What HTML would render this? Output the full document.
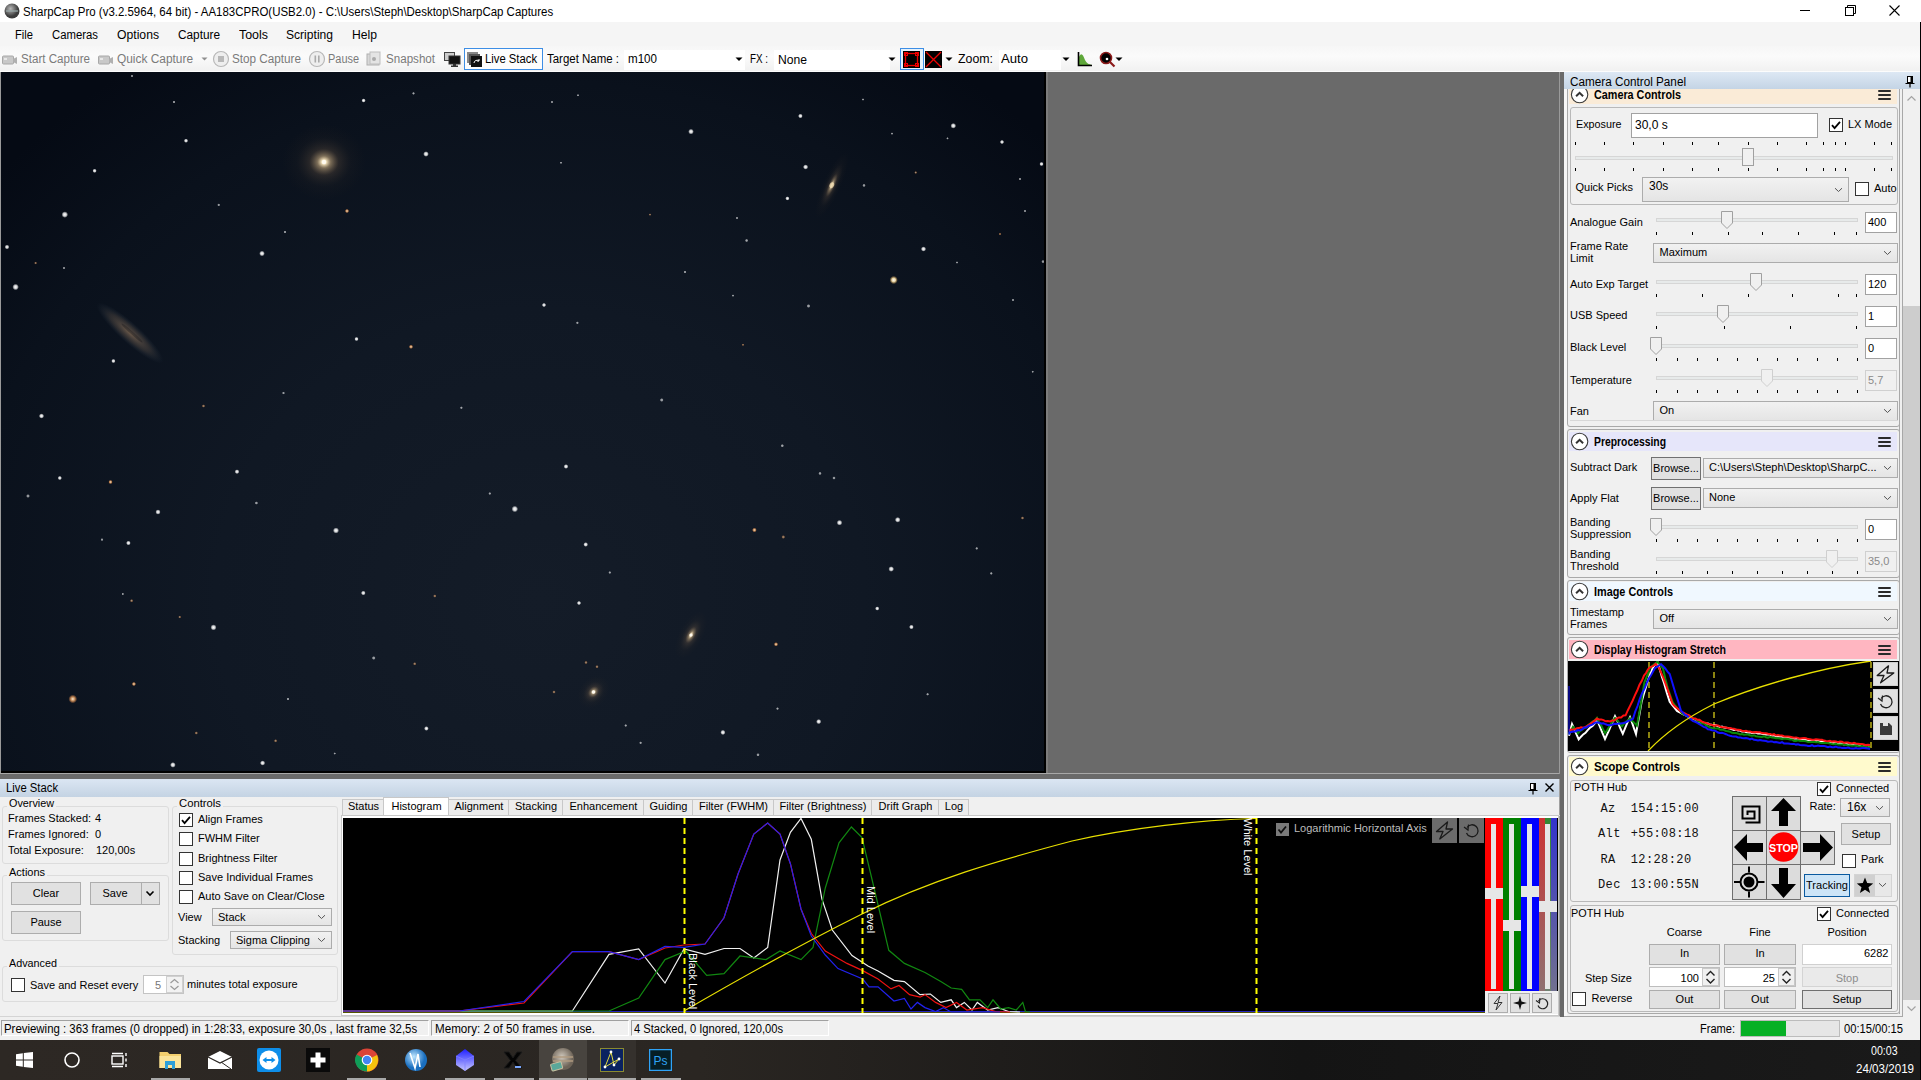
<!DOCTYPE html><html><head><meta charset="utf-8"><style>
html,body{margin:0;padding:0;width:1921px;height:1080px;overflow:hidden;background:#f0f0f0;}
body{position:relative;font-family:"Liberation Sans", sans-serif;}
.t{position:absolute;white-space:pre;line-height:1;}
.r{position:absolute;box-sizing:border-box;}
svg{position:absolute;}
</style></head><body>
<div class="r" style="left:0px;top:0px;width:1921px;height:22px;background:#ffffff;"></div>
<svg style="left:4px;top:3px" width="16" height="16"><defs><radialGradient id="ai" cx="40%" cy="35%"><stop offset="0" stop-color="#b8b8b8"/><stop offset="1" stop-color="#3c3c3c"/></radialGradient></defs><circle cx="8" cy="8" r="7.5" fill="url(#ai)"/><rect x="2" y="7" width="12" height="2" fill="#9aa" opacity=".6"/></svg>
<div class="t" style="left:23.00px;top:5.84px;font-size:12px;color:#000;transform:scaleX(0.9553);transform-origin:0 0;">SharpCap Pro (v3.2.5964, 64 bit) - AA183CPRO(USB2.0) - C:\Users\Steph\Desktop\SharpCap Captures</div>
<svg style="left:1790px;top:0" width="131" height="22"><path d="M10 10.5h10" stroke="#000" stroke-width="1"/><rect x="55.5" y="7.5" width="8" height="8" fill="none" stroke="#000"/><path d="M57.5 7.5v-2h8v8h-2" fill="none" stroke="#000"/><path d="M99.5 5.5l10 10M109.5 5.5l-10 10" stroke="#000" stroke-width="1.1"/></svg>
<div class="r" style="left:0px;top:22px;width:1921px;height:24px;background:#f5f5f5;"></div>
<div class="t" style="left:15.00px;top:28.84px;font-size:12px;color:#000;transform:scaleX(0.9305);transform-origin:0 0;">File</div>
<div class="t" style="left:52.00px;top:28.84px;font-size:12px;color:#000;transform:scaleX(0.9448);transform-origin:0 0;">Cameras</div>
<div class="t" style="left:117.00px;top:28.84px;font-size:12px;color:#000;transform:scaleX(1.0159);transform-origin:0 0;">Options</div>
<div class="t" style="left:178.00px;top:28.84px;font-size:12px;color:#000;transform:scaleX(0.9839);transform-origin:0 0;">Capture</div>
<div class="t" style="left:239.00px;top:28.84px;font-size:12px;color:#000;transform:scaleX(1.0351);transform-origin:0 0;">Tools</div>
<div class="t" style="left:286.00px;top:28.84px;font-size:12px;color:#000;transform:scaleX(1.0067);transform-origin:0 0;">Scripting</div>
<div class="t" style="left:352.00px;top:28.84px;font-size:12px;color:#000;transform:scaleX(1.0127);transform-origin:0 0;">Help</div>
<div class="r" style="left:0px;top:46px;width:1921px;height:26px;background:linear-gradient(#f6f6f6,#fbfbfb 40%,#f1f1f1 95%,#fcfcfc 96%);"></div>
<svg style="left:2px;top:54px" width="16" height="12"><rect x="0.5" y="2" width="11" height="8" rx="1" fill="#c8c8c8" stroke="#a8a8a8"/><path d="M11 5l4-2v7l-4-2z" fill="#b0b0b0"/><rect x="2" y="4" width="3" height="2" fill="#e8e8e8"/></svg>
<div class="t" style="left:21.00px;top:52.84px;font-size:12px;color:#7a7a7a;transform:scaleX(0.9671);transform-origin:0 0;">Start Capture</div>
<svg style="left:98px;top:54px" width="16" height="12"><rect x="0.5" y="2" width="11" height="8" rx="1" fill="#c8c8c8" stroke="#a8a8a8"/><path d="M11 5l4-2v7l-4-2z" fill="#b0b0b0"/><rect x="2" y="4" width="3" height="2" fill="#e8e8e8"/></svg>
<div class="t" style="left:117.00px;top:52.84px;font-size:12px;color:#7a7a7a;transform:scaleX(0.9910);transform-origin:0 0;">Quick Capture</div>
<svg style="left:200px;top:56px" width="10" height="6"><path d="M1.5 1.5h6l-3 3z" fill="#909090"/></svg>
<svg style="left:212px;top:50px" width="18" height="18"><circle cx="9" cy="9" r="7.5" fill="#eee" stroke="#b8b8b8" stroke-width="1.2"/><rect x="6" y="6" width="6" height="6" fill="#b8b8b8"/></svg>
<div class="t" style="left:232.00px;top:52.84px;font-size:12px;color:#7a7a7a;transform:scaleX(0.9761);transform-origin:0 0;">Stop Capture</div>
<svg style="left:308px;top:50px" width="18" height="18"><circle cx="9" cy="9" r="7.5" fill="#eee" stroke="#b8b8b8" stroke-width="1.2"/><rect x="6.5" y="5.5" width="1.6" height="7" fill="#aaa"/><rect x="10" y="5.5" width="1.6" height="7" fill="#aaa"/></svg>
<div class="t" style="left:328.00px;top:52.84px;font-size:12px;color:#7a7a7a;transform:scaleX(0.9113);transform-origin:0 0;">Pause</div>
<svg style="left:366px;top:51px" width="16" height="16"><rect x="1" y="3" width="12" height="11" fill="#d8d8d8" stroke="#b0b0b0"/><rect x="4" y="1" width="10" height="12" fill="#e4e4e4" stroke="#bdbdbd"/><circle cx="8" cy="8" r="2" fill="#aaa"/></svg>
<div class="t" style="left:386.00px;top:52.84px;font-size:12px;color:#7a7a7a;transform:scaleX(0.9667);transform-origin:0 0;">Snapshot</div>
<svg style="left:444px;top:52px" width="17" height="15"><rect x="0.5" y="0.5" width="10" height="8" fill="#ccc" stroke="#444"/><rect x="5" y="4" width="11" height="8" fill="#111" stroke="#333"/><rect x="9" y="12" width="3" height="2" fill="#333"/><rect x="7" y="13.5" width="7" height="1.5" fill="#333"/></svg>
<div class="r" style="left:464px;top:48px;width:79px;height:22px;background:#fdfdfd;box-shadow:inset 0 0 0 1px #3d8ee5;"></div>
<svg style="left:467px;top:52px" width="16" height="16"><rect x="0" y="0" width="11" height="11" fill="#888"/><rect x="2" y="2" width="11" height="11" fill="#555"/><rect x="4" y="4" width="11" height="11" fill="#111"/><path d="M7 11a3 3 0 0 1 5-2M12 9v-2M12 9h-2" stroke="#fff" fill="none" stroke-width="1"/></svg>
<div class="t" style="left:485.00px;top:52.84px;font-size:12px;color:#000;transform:scaleX(0.9396);transform-origin:0 0;">Live Stack</div>
<div class="t" style="left:547.00px;top:52.84px;font-size:12px;color:#000;transform:scaleX(0.9556);transform-origin:0 0;">Target Name :</div>
<div class="r" style="left:624px;top:50px;width:121px;height:20px;background:#ffffff;"></div>
<div class="t" style="left:628.00px;top:52.84px;font-size:12px;color:#000;transform:scaleX(0.9662);transform-origin:0 0;">m100</div>
<svg style="left:735px;top:57px" width="8" height="5"><path d="M0.5 0.5h7l-3.5 3.5z" fill="#000"/></svg>
<div class="t" style="left:750.00px;top:52.84px;font-size:12px;color:#000;transform:scaleX(0.8188);transform-origin:0 0;">FX :</div>
<div class="r" style="left:774px;top:50px;width:116px;height:20px;background:#ffffff;"></div>
<div class="t" style="left:778.00px;top:53.84px;font-size:12px;color:#000;transform:scaleX(1.0109);transform-origin:0 0;">None</div>
<svg style="left:888px;top:57px" width="8" height="5"><path d="M0.5 0.5h7l-3.5 3.5z" fill="#000"/></svg>
<div class="r" style="left:900px;top:48px;width:24px;height:22px;background:#e5f1fb;box-shadow:inset 0 0 0 1px #3d8ee5;"></div>
<svg style="left:903px;top:51px" width="17" height="17"><rect width="17" height="17" fill="#000"/><rect x="2.5" y="2.5" width="12" height="12" fill="none" stroke="#e00" stroke-width="1.3"/><rect x="1.5" y="1.5" width="3" height="3" fill="none" stroke="#e00"/><rect x="12.5" y="1.5" width="3" height="3" fill="none" stroke="#e00"/><rect x="1.5" y="12.5" width="3" height="3" fill="none" stroke="#e00"/><rect x="12.5" y="12.5" width="3" height="3" fill="none" stroke="#e00"/></svg>
<svg style="left:925px;top:51px" width="17" height="17"><rect width="17" height="17" fill="#000"/><path d="M1 1l15 15M16 1l-15 15" stroke="#e00" stroke-width="1.3"/></svg>
<svg style="left:945px;top:57px" width="8" height="5"><path d="M0.5 0.5h7l-3.5 3.5z" fill="#000"/></svg>
<div class="t" style="left:958.00px;top:52.84px;font-size:12px;color:#000;transform:scaleX(1.0294);transform-origin:0 0;">Zoom:</div>
<div class="r" style="left:999px;top:50px;width:62px;height:20px;background:#ffffff;"></div>
<div class="t" style="left:1001.00px;top:52.84px;font-size:12px;color:#000;transform:scaleX(1.0944);transform-origin:0 0;">Auto</div>
<svg style="left:1062px;top:57px" width="8" height="5"><path d="M0.5 0.5h7l-3.5 3.5z" fill="#000"/></svg>
<svg style="left:1077px;top:51px" width="16" height="16"><path d="M2 14 L2 6 C4 1 6 3 8 9 C10 13 12 13 15 14 Z" fill="#5fa83a"/><path d="M1.5 1v13.5H15" stroke="#000" stroke-width="1.6" fill="none"/></svg>
<svg style="left:1099px;top:51px" width="18" height="17"><circle cx="7" cy="7" r="5.5" fill="#000" stroke="#8b1a1a" stroke-width="1.6"/><path d="M10.5 10.5l5 5" stroke="#8b1a1a" stroke-width="2.2"/><circle cx="8" cy="8" r="1.3" fill="#fff"/></svg>
<svg style="left:1115px;top:57px" width="8" height="5"><path d="M0.5 0.5h7l-3.5 3.5z" fill="#000"/></svg>
<svg style="left:0;top:72px" width="1046" height="701" viewBox="0 72 1046 701"><defs><radialGradient id="bg" gradientUnits="userSpaceOnUse" cx="540" cy="600" r="720" gradientTransform="translate(540 600) scale(1 0.9) translate(-540 -600)"><stop offset="0" stop-color="#141c28"/><stop offset="0.45" stop-color="#101824"/><stop offset="0.8" stop-color="#0a111c"/><stop offset="1" stop-color="#050a14"/></radialGradient><radialGradient id="glw"><stop offset="0" stop-color="#fffaf0"/><stop offset="0.06" stop-color="#fae8c0" stop-opacity=".95"/><stop offset="0.16" stop-color="#d8b888" stop-opacity=".55"/><stop offset="0.35" stop-color="#907050" stop-opacity=".22"/><stop offset="0.65" stop-color="#504030" stop-opacity=".08"/><stop offset="1" stop-color="#403020" stop-opacity="0"/></radialGradient><radialGradient id="sg"><stop offset="0" stop-color="#fff"/><stop offset="0.5" stop-color="#fff" stop-opacity=".8"/><stop offset="1" stop-color="#fff" stop-opacity="0"/></radialGradient><radialGradient id="so"><stop offset="0" stop-color="#fff0d8"/><stop offset="0.5" stop-color="#e8a060" stop-opacity=".8"/><stop offset="1" stop-color="#e08040" stop-opacity="0"/></radialGradient><radialGradient id="sy"><stop offset="0" stop-color="#fff"/><stop offset="0.45" stop-color="#ffe8b0" stop-opacity=".9"/><stop offset="1" stop-color="#e0a040" stop-opacity="0"/></radialGradient></defs><rect x="0" y="72" width="1046" height="701" fill="#060a14"/><rect x="0" y="72" width="1046" height="701" fill="url(#bg)"/><circle cx="426" cy="154" r="2.86" fill="url(#sg)" opacity="1"/><circle cx="363.6" cy="100.5" r="2.20" fill="url(#sg)" opacity="1"/><circle cx="186" cy="140.7" r="2.20" fill="url(#sg)" opacity="1"/><circle cx="94.6" cy="170.8" r="2.20" fill="url(#sg)" opacity="1"/><circle cx="64.8" cy="214.6" r="3.30" fill="url(#sg)" opacity="1"/><circle cx="7" cy="247" r="2.42" fill="url(#sg)" opacity="1"/><circle cx="15.6" cy="287" r="3.30" fill="url(#sg)" opacity="1"/><circle cx="262" cy="253.5" r="2.86" fill="url(#sg)" opacity="1"/><circle cx="347" cy="211" r="2.20" fill="url(#so)" opacity="1"/><circle cx="285" cy="232" r="1.54" fill="url(#sg)" opacity="0.65"/><circle cx="218.7" cy="204.9" r="1.54" fill="url(#sg)" opacity="0.65"/><circle cx="113.4" cy="361" r="2.20" fill="url(#sg)" opacity="1"/><circle cx="41.5" cy="416" r="2.64" fill="url(#sg)" opacity="1"/><circle cx="356.5" cy="339" r="2.20" fill="url(#sg)" opacity="1"/><circle cx="411" cy="346.8" r="2.20" fill="url(#so)" opacity="1"/><circle cx="203.5" cy="406" r="1.76" fill="url(#so)" opacity="0.65"/><circle cx="283.5" cy="393" r="1.54" fill="url(#sg)" opacity="0.65"/><circle cx="461.4" cy="407.7" r="1.54" fill="url(#sg)" opacity="0.65"/><circle cx="413.5" cy="93.4" r="1.54" fill="url(#sg)" opacity="0.65"/><circle cx="174" cy="102" r="1.54" fill="url(#sg)" opacity="0.65"/><circle cx="132" cy="76" r="1.32" fill="url(#sg)" opacity="0.65"/><circle cx="35.6" cy="263" r="1.54" fill="url(#so)" opacity="0.65"/><circle cx="64" cy="268" r="1.32" fill="url(#sg)" opacity="0.65"/><circle cx="691" cy="131.6" r="2.86" fill="url(#sg)" opacity="1"/><circle cx="800.4" cy="116" r="2.42" fill="url(#sg)" opacity="1"/><circle cx="953.3" cy="125.8" r="2.86" fill="url(#sg)" opacity="1"/><circle cx="1002" cy="142" r="2.20" fill="url(#sg)" opacity="1"/><circle cx="1041.5" cy="164" r="2.20" fill="url(#sg)" opacity="1"/><circle cx="805.6" cy="167" r="2.64" fill="url(#sg)" opacity="1"/><circle cx="787.4" cy="198.4" r="2.20" fill="url(#sg)" opacity="1"/><circle cx="864" cy="185.4" r="1.76" fill="url(#sg)" opacity="0.65"/><circle cx="746.6" cy="240.5" r="1.76" fill="url(#sg)" opacity="0.65"/><circle cx="923.5" cy="249" r="2.64" fill="url(#sg)" opacity="1"/><circle cx="893.7" cy="280" r="4.18" fill="url(#sy)" opacity="1"/><circle cx="685" cy="272" r="1.54" fill="url(#sg)" opacity="0.65"/><circle cx="544" cy="305" r="2.20" fill="url(#sg)" opacity="1"/><circle cx="808.5" cy="306" r="1.98" fill="url(#sg)" opacity="0.65"/><circle cx="577.4" cy="322.8" r="1.54" fill="url(#sg)" opacity="0.65"/><circle cx="661.7" cy="400" r="1.98" fill="url(#sg)" opacity="0.65"/><circle cx="1043" cy="261.6" r="1.76" fill="url(#sg)" opacity="0.65"/><circle cx="957" cy="262.5" r="1.32" fill="url(#sg)" opacity="0.65"/><circle cx="59.8" cy="478" r="2.20" fill="url(#sg)" opacity="1"/><circle cx="28" cy="496" r="1.98" fill="url(#sg)" opacity="0.65"/><circle cx="110.5" cy="482" r="2.20" fill="url(#so)" opacity="1"/><circle cx="158" cy="512" r="2.64" fill="url(#sg)" opacity="1"/><circle cx="128.4" cy="543" r="2.42" fill="url(#sg)" opacity="1"/><circle cx="102" cy="539.6" r="1.54" fill="url(#sg)" opacity="0.65"/><circle cx="237" cy="471.7" r="2.42" fill="url(#sg)" opacity="1"/><circle cx="256.4" cy="503" r="1.76" fill="url(#sg)" opacity="0.65"/><circle cx="336" cy="530.5" r="3.08" fill="url(#sg)" opacity="1"/><circle cx="514.8" cy="509" r="3.30" fill="url(#sg)" opacity="1"/><circle cx="489.8" cy="493.5" r="1.54" fill="url(#sg)" opacity="0.65"/><circle cx="363.3" cy="593" r="2.42" fill="url(#sg)" opacity="1"/><circle cx="434.8" cy="596" r="1.76" fill="url(#so)" opacity="0.65"/><circle cx="213.5" cy="627.4" r="3.08" fill="url(#sg)" opacity="1"/><circle cx="131.6" cy="600.7" r="1.76" fill="url(#so)" opacity="0.65"/><circle cx="179.7" cy="617" r="1.54" fill="url(#so)" opacity="0.65"/><circle cx="72.8" cy="699" r="4.40" fill="url(#so)" opacity="1"/><circle cx="133.9" cy="684" r="2.20" fill="url(#so)" opacity="1"/><circle cx="373.7" cy="658" r="1.98" fill="url(#sg)" opacity="0.65"/><circle cx="414.7" cy="663.8" r="1.76" fill="url(#so)" opacity="0.65"/><circle cx="288" cy="699" r="1.54" fill="url(#sg)" opacity="0.65"/><circle cx="426.4" cy="728.5" r="2.42" fill="url(#sg)" opacity="1"/><circle cx="196.3" cy="733" r="1.76" fill="url(#so)" opacity="0.65"/><circle cx="275.6" cy="740.8" r="1.76" fill="url(#so)" opacity="0.65"/><circle cx="172.9" cy="764.9" r="2.86" fill="url(#sg)" opacity="1"/><circle cx="262.6" cy="763" r="2.64" fill="url(#sg)" opacity="1"/><circle cx="122.8" cy="594" r="1.32" fill="url(#sg)" opacity="0.65"/><circle cx="334.7" cy="753.5" r="1.32" fill="url(#sg)" opacity="0.65"/><circle cx="566" cy="466.5" r="2.42" fill="url(#sg)" opacity="1"/><circle cx="585.7" cy="544.5" r="2.42" fill="url(#sg)" opacity="1"/><circle cx="579" cy="603" r="2.20" fill="url(#sg)" opacity="1"/><circle cx="586" cy="662.5" r="1.76" fill="url(#so)" opacity="0.65"/><circle cx="597" cy="666.7" r="1.76" fill="url(#so)" opacity="0.65"/><circle cx="554" cy="692" r="1.76" fill="url(#so)" opacity="0.65"/><circle cx="754.4" cy="530" r="2.42" fill="url(#so)" opacity="1"/><circle cx="783.3" cy="537" r="1.98" fill="url(#so)" opacity="0.65"/><circle cx="839.5" cy="522.7" r="2.86" fill="url(#sg)" opacity="1"/><circle cx="897.7" cy="519.8" r="2.86" fill="url(#sg)" opacity="1"/><circle cx="820" cy="473.4" r="1.76" fill="url(#sg)" opacity="0.65"/><circle cx="834" cy="478" r="1.76" fill="url(#sg)" opacity="0.65"/><circle cx="782.3" cy="445.7" r="1.76" fill="url(#sg)" opacity="0.65"/><circle cx="891.2" cy="569" r="2.86" fill="url(#sg)" opacity="1"/><circle cx="877.2" cy="608.5" r="2.20" fill="url(#sg)" opacity="1"/><circle cx="911.4" cy="627" r="2.42" fill="url(#sg)" opacity="1"/><circle cx="776" cy="644.3" r="2.20" fill="url(#so)" opacity="1"/><circle cx="1022.5" cy="518" r="1.76" fill="url(#so)" opacity="0.65"/><circle cx="976.7" cy="548.4" r="1.54" fill="url(#sg)" opacity="0.65"/><circle cx="991.3" cy="573.4" r="1.54" fill="url(#sg)" opacity="0.65"/><circle cx="915.7" cy="172.5" r="1.54" fill="url(#so)" opacity="0.65"/><circle cx="892" cy="133.6" r="1.32" fill="url(#sg)" opacity="0.65"/><circle cx="947.5" cy="138.4" r="1.32" fill="url(#sg)" opacity="0.65"/><circle cx="863" cy="99.5" r="1.32" fill="url(#sg)" opacity="0.65"/><circle cx="561" cy="162.7" r="1.32" fill="url(#sg)" opacity="0.65"/><circle cx="552" cy="102" r="1.32" fill="url(#sg)" opacity="0.65"/><circle cx="578" cy="95.3" r="1.32" fill="url(#sg)" opacity="0.65"/><circle cx="650" cy="214.6" r="1.32" fill="url(#so)" opacity="0.65"/><circle cx="737" cy="218" r="1.32" fill="url(#sg)" opacity="0.65"/><circle cx="1000" cy="234" r="1.32" fill="url(#so)" opacity="0.65"/><circle cx="1013" cy="300" r="1.32" fill="url(#sg)" opacity="0.65"/><circle cx="733" cy="295.6" r="1.32" fill="url(#sg)" opacity="0.65"/><circle cx="743" cy="344.8" r="1.32" fill="url(#so)" opacity="0.65"/><circle cx="1032.7" cy="371.7" r="1.32" fill="url(#sg)" opacity="0.65"/><circle cx="1025" cy="211" r="1.32" fill="url(#sg)" opacity="0.65"/><circle cx="1020" cy="179" r="1.32" fill="url(#sg)" opacity="0.65"/><circle cx="818.7" cy="721.6" r="2.64" fill="url(#sg)" opacity="1"/><circle cx="722.9" cy="732.4" r="2.64" fill="url(#sg)" opacity="1"/><circle cx="758" cy="754.8" r="1.76" fill="url(#sg)" opacity="0.65"/><circle cx="640.6" cy="742.8" r="1.54" fill="url(#sg)" opacity="0.65"/><circle cx="625.7" cy="725.5" r="1.54" fill="url(#sg)" opacity="0.65"/><circle cx="777.5" cy="708.6" r="1.54" fill="url(#sg)" opacity="0.65"/><circle cx="927.6" cy="694.3" r="1.54" fill="url(#sg)" opacity="0.65"/><circle cx="609.8" cy="572.5" r="1.54" fill="url(#sg)" opacity="0.65"/><ellipse cx="324" cy="162" rx="42" ry="38" fill="url(#glw)"/><circle cx="324" cy="162" r="2.2" fill="#fffaf0"/><defs><radialGradient id="g2"><stop offset="0" stop-color="#8a7058" stop-opacity=".75"/><stop offset="0.6" stop-color="#5a5048" stop-opacity=".4"/><stop offset="1" stop-color="#304050" stop-opacity="0"/></radialGradient></defs><ellipse cx="130" cy="333" rx="44" ry="10" transform="rotate(42 130 333)" fill="url(#g2)"/><ellipse cx="132" cy="333" rx="14" ry="1.5" transform="rotate(42 132 333)" fill="#0a0c14" opacity=".3"/><ellipse cx="831.8" cy="185.2" rx="36" ry="9" transform="rotate(-66 831.8 185.2)" fill="url(#glw)" opacity=".9"/><ellipse cx="831.8" cy="185.2" rx="3" ry="2.2" transform="rotate(-66 831.8 185.2)" fill="#f0dcb0" opacity=".8"/><ellipse cx="691" cy="635" rx="26" ry="12" transform="rotate(-62 691 635)" fill="url(#glw)"/><circle cx="691" cy="635" r="1.6" fill="#fffaf0"/><ellipse cx="593.5" cy="692" rx="18" ry="14" transform="rotate(-50 593.5 692)" fill="url(#glw)"/><circle cx="593.5" cy="692" r="1.8" fill="#fffaf0"/></svg>
<div class="r" style="left:1046px;top:72px;width:513px;height:701px;background:#6a6a6a;"></div>
<div class="r" style="left:1046px;top:72px;width:2px;height:701px;background:#7c7c7c;"></div>
<div class="r" style="left:1044px;top:72px;width:2px;height:701px;background:#000;"></div>
<div class="r" style="left:0px;top:771px;width:1046px;height:2px;background:#000;"></div>
<div class="r" style="left:0px;top:72px;width:1px;height:701px;background:#9a9a9a;"></div>
<div class="r" style="left:1559px;top:72px;width:1px;height:706px;background:#9a9a9a;"></div>
<div class="r" style="left:1560px;top:72px;width:4px;height:968px;background:#6a6a6a;"></div>
<div class="r" style="left:0px;top:773px;width:1559px;height:1px;background:#a8a8a8;"></div>
<div class="r" style="left:0px;top:774px;width:1560px;height:5px;background:#6a6a6a;"></div>
<div class="r" style="left:1564px;top:72px;width:357px;height:968px;background:#f0f0f0;"></div>
<div class="r" style="left:1564px;top:89px;width:3px;height:927px;background:#f7f7f7;"></div>
<div class="r" style="left:1564px;top:72px;width:356px;height:17px;background:linear-gradient(#dde8f4,#c4d4e5);"></div>
<div class="t" style="left:1570.00px;top:75.84px;font-size:12px;color:#000;transform:scaleX(0.9771);transform-origin:0 0;">Camera Control Panel</div>
<svg style="left:1905px;top:76px" width="10" height="12"><rect x="2.5" y="0.5" width="5" height="6" fill="#fff" stroke="#000"/><rect x="5.5" y="0.5" width="2" height="6" fill="#000"/><path d="M0.5 7.5h9M5 7.5v4" stroke="#000" stroke-width="1.2"/></svg>
<div class="r" style="left:1920px;top:22px;width:1px;height:1018px;background:#000000;"></div>
<div class="r" style="left:1903px;top:89px;width:17px;height:927px;background:#f0f0f0;"></div>
<div class="r" style="left:1903px;top:306px;width:17px;height:694px;background:#cdcdcd;"></div>
<svg style="left:1906px;top:94px" width="11" height="8"><path d="M1.5 6.5l4-4 4 4" stroke="#a3a3a3" fill="none" stroke-width="1.2"/></svg>
<svg style="left:1906px;top:1005px" width="11" height="8"><path d="M1.5 1.5l4 4 4-4" stroke="#a3a3a3" fill="none" stroke-width="1.2"/></svg>
<div class="r" style="left:1902px;top:89px;width:1px;height:927px;background:#a8a8a8;"></div>
<div class="r" style="left:1567px;top:1016px;width:336px;height:1px;background:#a8a8a8;"></div>
<div class="r" style="left:1567px;top:83px;width:333px;height:344px;border:1px solid #a9a9a9;border-radius:3px;"></div>
<div class="r" style="left:1569px;top:85px;width:328px;height:19px;background:#faebd7;"></div>
<svg style="left:1570px;top:85px" width="20" height="20"><circle cx="9.6" cy="9.5" r="8.2" fill="#fff" stroke="#3a3a3a" stroke-width="1.1"/><path d="M6.1 11.3l3.5-3.4 3.5 3.4" stroke="#333" stroke-width="2" fill="none"/></svg>
<div class="t" style="left:1594.00px;top:88.84px;font-size:12px;color:#000;font-weight:bold;transform:scaleX(0.8998);transform-origin:0 0;">Camera Controls</div>
<div class="r" style="left:1878px;top:90px;width:13px;height:2px;background:#2a2a2a;border-radius:1px;"></div>
<div class="r" style="left:1878px;top:94px;width:13px;height:2px;background:#2a2a2a;border-radius:1px;"></div>
<div class="r" style="left:1878px;top:98px;width:13px;height:2px;background:#2a2a2a;border-radius:1px;"></div>
<div class="r" style="left:1564px;top:72px;width:356px;height:17px;background:linear-gradient(#dde8f4,#c4d4e5);"></div>
<div class="t" style="left:1570.00px;top:75.84px;font-size:12px;color:#000;transform:scaleX(0.9771);transform-origin:0 0;">Camera Control Panel</div>
<svg style="left:1905px;top:76px" width="10" height="12"><rect x="2.5" y="0.5" width="5" height="6" fill="#fff" stroke="#000"/><rect x="5.5" y="0.5" width="2" height="6" fill="#000"/><path d="M0.5 7.5h9M5 7.5v4" stroke="#000" stroke-width="1.2"/></svg>
<div class="r" style="left:1564px;top:89px;width:3px;height:927px;background:#f7f7f7;"></div>
<div class="r" style="left:1899px;top:89px;width:1px;height:925px;background:#a9a9a9;"></div>
<div class="r" style="left:1570px;top:107px;width:328px;height:98px;border:1px solid #b9b9b9;border-radius:3px;"></div>
<div class="t" style="left:1575.50px;top:118.69px;font-size:11px;color:#000;transform:scaleX(0.9785);transform-origin:0 0;">Exposure</div>
<div class="r" style="left:1631px;top:113px;width:187px;height:25px;background:#fff;box-shadow:inset 0 0 0 1px #a2a2a2;"></div>
<div class="t" style="left:1635.00px;top:118.84px;font-size:12px;color:#000;">30,0 s</div>
<div class="r" style="left:1829px;top:118px;width:14px;height:14px;background:#fff;box-shadow:inset 0 0 0 1px #333;"></div>
<svg style="left:1829px;top:118px" width="14" height="14"><path d="M3 7.2l2.6 3 5.4-6.4" stroke="#000" stroke-width="1.8" fill="none"/></svg>
<div class="t" style="left:1848.00px;top:118.69px;font-size:11px;color:#000;">LX Mode</div>
<div class="r" style="left:1575px;top:156px;width:318px;height:4px;background:#e7eaea;box-shadow:inset 0 0 0 1px #d6d6d6;"></div>
<svg style="left:1742px;top:148px" width="13" height="19"><rect x="0.5" y="0.5" width="11" height="17" fill="#f0f0f0" stroke="#a0a0a0"/></svg>
<div class="r" style="left:1575px;top:142px;width:1px;height:3px;background:#000;"></div>
<div class="r" style="left:1575px;top:168px;width:1px;height:3px;background:#000;"></div>
<div class="r" style="left:1604px;top:142px;width:1px;height:3px;background:#000;"></div>
<div class="r" style="left:1604px;top:168px;width:1px;height:3px;background:#000;"></div>
<div class="r" style="left:1633px;top:142px;width:1px;height:3px;background:#000;"></div>
<div class="r" style="left:1633px;top:168px;width:1px;height:3px;background:#000;"></div>
<div class="r" style="left:1663px;top:142px;width:1px;height:3px;background:#000;"></div>
<div class="r" style="left:1663px;top:168px;width:1px;height:3px;background:#000;"></div>
<div class="r" style="left:1692px;top:142px;width:1px;height:3px;background:#000;"></div>
<div class="r" style="left:1692px;top:168px;width:1px;height:3px;background:#000;"></div>
<div class="r" style="left:1718px;top:142px;width:1px;height:3px;background:#000;"></div>
<div class="r" style="left:1718px;top:168px;width:1px;height:3px;background:#000;"></div>
<div class="r" style="left:1748px;top:142px;width:1px;height:3px;background:#000;"></div>
<div class="r" style="left:1748px;top:168px;width:1px;height:3px;background:#000;"></div>
<div class="r" style="left:1777px;top:142px;width:1px;height:3px;background:#000;"></div>
<div class="r" style="left:1777px;top:168px;width:1px;height:3px;background:#000;"></div>
<div class="r" style="left:1806px;top:142px;width:1px;height:3px;background:#000;"></div>
<div class="r" style="left:1806px;top:168px;width:1px;height:3px;background:#000;"></div>
<div class="r" style="left:1823px;top:142px;width:1px;height:3px;background:#000;"></div>
<div class="r" style="left:1823px;top:168px;width:1px;height:3px;background:#000;"></div>
<div class="r" style="left:1835px;top:142px;width:1px;height:3px;background:#000;"></div>
<div class="r" style="left:1835px;top:168px;width:1px;height:3px;background:#000;"></div>
<div class="r" style="left:1845px;top:142px;width:1px;height:3px;background:#000;"></div>
<div class="r" style="left:1845px;top:168px;width:1px;height:3px;background:#000;"></div>
<div class="r" style="left:1874px;top:142px;width:1px;height:3px;background:#000;"></div>
<div class="r" style="left:1874px;top:168px;width:1px;height:3px;background:#000;"></div>
<div class="r" style="left:1891px;top:142px;width:1px;height:3px;background:#000;"></div>
<div class="r" style="left:1891px;top:168px;width:1px;height:3px;background:#000;"></div>
<div class="t" style="left:1575.50px;top:182.19px;font-size:11px;color:#000;">Quick Picks</div>
<div class="r" style="left:1642px;top:177px;width:207px;height:25px;background:linear-gradient(#f2f2f2,#e4e4e4);box-shadow:inset 0 0 0 1px #acacac;"></div>
<div class="t" style="left:1649.00px;top:179.84px;font-size:12px;color:#000;">30s</div>
<svg style="left:1834px;top:186.5px" width="9" height="6"><path d="M1 1.2l3.5 3.3 3.5-3.3" stroke="#555" fill="none" stroke-width="1"/></svg>
<div class="r" style="left:1855px;top:182px;width:14px;height:14px;background:#fff;box-shadow:inset 0 0 0 1px #333;"></div>
<div class="t" style="left:1874.00px;top:182.69px;font-size:11px;color:#000;">Auto</div>
<div class="t" style="left:1570.00px;top:216.69px;font-size:11px;color:#000;">Analogue Gain</div>
<div class="r" style="left:1656px;top:218px;width:202px;height:4px;background:#e7eaea;box-shadow:inset 0 0 0 1px #d6d6d6;"></div>
<svg style="left:1721px;top:211px" width="13" height="19"><path d="M0.5 0.5h11v11.5l-5.5 5.5-5.5-5.5z" fill="#f0f0f0" stroke="#a0a0a0"/></svg>
<div class="r" style="left:1656px;top:232px;width:1px;height:3px;background:#000;"></div>
<div class="r" style="left:1692px;top:232px;width:1px;height:3px;background:#000;"></div>
<div class="r" style="left:1728px;top:232px;width:1px;height:3px;background:#000;"></div>
<div class="r" style="left:1762px;top:232px;width:1px;height:3px;background:#000;"></div>
<div class="r" style="left:1798px;top:232px;width:1px;height:3px;background:#000;"></div>
<div class="r" style="left:1834px;top:232px;width:1px;height:3px;background:#000;"></div>
<div class="r" style="left:1856px;top:232px;width:1px;height:3px;background:#000;"></div>
<div class="r" style="left:1865px;top:212px;width:32px;height:21px;background:#fff;box-shadow:inset 0 0 0 1px #a2a2a2;"></div>
<div class="t" style="left:1868.00px;top:217.19px;font-size:11px;color:#000;">400</div>
<div class="t" style="left:1570.00px;top:241.19px;font-size:11px;color:#000;">Frame Rate</div>
<div class="t" style="left:1570.00px;top:253.19px;font-size:11px;color:#000;">Limit</div>
<div class="r" style="left:1653px;top:243px;width:245px;height:20px;background:linear-gradient(#f2f2f2,#e4e4e4);box-shadow:inset 0 0 0 1px #acacac;"></div>
<div class="t" style="left:1659.50px;top:246.69px;font-size:11px;color:#000;">Maximum</div>
<svg style="left:1883px;top:250.0px" width="9" height="6"><path d="M1 1.2l3.5 3.3 3.5-3.3" stroke="#555" fill="none" stroke-width="1"/></svg>
<div class="t" style="left:1570.00px;top:278.69px;font-size:11px;color:#000;">Auto Exp Target</div>
<div class="r" style="left:1656px;top:280px;width:202px;height:4px;background:#e7eaea;box-shadow:inset 0 0 0 1px #d6d6d6;"></div>
<svg style="left:1750px;top:273px" width="13" height="19"><path d="M0.5 0.5h11v11.5l-5.5 5.5-5.5-5.5z" fill="#f0f0f0" stroke="#a0a0a0"/></svg>
<div class="r" style="left:1656px;top:294px;width:1px;height:3px;background:#000;"></div>
<div class="r" style="left:1702px;top:294px;width:1px;height:3px;background:#000;"></div>
<div class="r" style="left:1748px;top:294px;width:1px;height:3px;background:#000;"></div>
<div class="r" style="left:1792px;top:294px;width:1px;height:3px;background:#000;"></div>
<div class="r" style="left:1838px;top:294px;width:1px;height:3px;background:#000;"></div>
<div class="r" style="left:1856px;top:294px;width:1px;height:3px;background:#000;"></div>
<div class="r" style="left:1865px;top:274px;width:32px;height:21px;background:#fff;box-shadow:inset 0 0 0 1px #a2a2a2;"></div>
<div class="t" style="left:1868.00px;top:279.19px;font-size:11px;color:#000;">120</div>
<div class="t" style="left:1570.00px;top:310.19px;font-size:11px;color:#000;">USB Speed</div>
<div class="r" style="left:1656px;top:312px;width:202px;height:4px;background:#e7eaea;box-shadow:inset 0 0 0 1px #d6d6d6;"></div>
<svg style="left:1717px;top:305px" width="13" height="19"><path d="M0.5 0.5h11v11.5l-5.5 5.5-5.5-5.5z" fill="#f0f0f0" stroke="#a0a0a0"/></svg>
<div class="r" style="left:1656px;top:326px;width:1px;height:3px;background:#000;"></div>
<div class="r" style="left:1724px;top:326px;width:1px;height:3px;background:#000;"></div>
<div class="r" style="left:1790px;top:326px;width:1px;height:3px;background:#000;"></div>
<div class="r" style="left:1856px;top:326px;width:1px;height:3px;background:#000;"></div>
<div class="r" style="left:1865px;top:306px;width:32px;height:21px;background:#fff;box-shadow:inset 0 0 0 1px #a2a2a2;"></div>
<div class="t" style="left:1868.00px;top:311.19px;font-size:11px;color:#000;">1</div>
<div class="t" style="left:1570.00px;top:342.19px;font-size:11px;color:#000;">Black Level</div>
<div class="r" style="left:1656px;top:344px;width:202px;height:4px;background:#e7eaea;box-shadow:inset 0 0 0 1px #d6d6d6;"></div>
<svg style="left:1650px;top:337px" width="13" height="19"><path d="M0.5 0.5h11v11.5l-5.5 5.5-5.5-5.5z" fill="#f0f0f0" stroke="#a0a0a0"/></svg>
<div class="r" style="left:1656px;top:358px;width:1px;height:3px;background:#000;"></div>
<div class="r" style="left:1677px;top:358px;width:1px;height:3px;background:#000;"></div>
<div class="r" style="left:1697px;top:358px;width:1px;height:3px;background:#000;"></div>
<div class="r" style="left:1717px;top:358px;width:1px;height:3px;background:#000;"></div>
<div class="r" style="left:1737px;top:358px;width:1px;height:3px;background:#000;"></div>
<div class="r" style="left:1757px;top:358px;width:1px;height:3px;background:#000;"></div>
<div class="r" style="left:1777px;top:358px;width:1px;height:3px;background:#000;"></div>
<div class="r" style="left:1797px;top:358px;width:1px;height:3px;background:#000;"></div>
<div class="r" style="left:1817px;top:358px;width:1px;height:3px;background:#000;"></div>
<div class="r" style="left:1837px;top:358px;width:1px;height:3px;background:#000;"></div>
<div class="r" style="left:1857px;top:358px;width:1px;height:3px;background:#000;"></div>
<div class="r" style="left:1865px;top:338px;width:32px;height:21px;background:#fff;box-shadow:inset 0 0 0 1px #a2a2a2;"></div>
<div class="t" style="left:1868.00px;top:343.19px;font-size:11px;color:#000;">0</div>
<div class="t" style="left:1570.00px;top:374.69px;font-size:11px;color:#000;">Temperature</div>
<div class="r" style="left:1656px;top:376px;width:202px;height:4px;background:#e7eaea;box-shadow:inset 0 0 0 1px #d6d6d6;"></div>
<svg style="left:1761px;top:369px" width="13" height="19"><path d="M0.5 0.5h11v11.5l-5.5 5.5-5.5-5.5z" fill="#f0f0f0" stroke="#cfcfcf"/></svg>
<div class="r" style="left:1656px;top:390px;width:1px;height:3px;background:#000;"></div>
<div class="r" style="left:1677px;top:390px;width:1px;height:3px;background:#000;"></div>
<div class="r" style="left:1697px;top:390px;width:1px;height:3px;background:#000;"></div>
<div class="r" style="left:1717px;top:390px;width:1px;height:3px;background:#000;"></div>
<div class="r" style="left:1737px;top:390px;width:1px;height:3px;background:#000;"></div>
<div class="r" style="left:1757px;top:390px;width:1px;height:3px;background:#000;"></div>
<div class="r" style="left:1777px;top:390px;width:1px;height:3px;background:#000;"></div>
<div class="r" style="left:1797px;top:390px;width:1px;height:3px;background:#000;"></div>
<div class="r" style="left:1817px;top:390px;width:1px;height:3px;background:#000;"></div>
<div class="r" style="left:1837px;top:390px;width:1px;height:3px;background:#000;"></div>
<div class="r" style="left:1857px;top:390px;width:1px;height:3px;background:#000;"></div>
<div class="r" style="left:1865px;top:370px;width:32px;height:21px;background:#f0f0f0;box-shadow:inset 0 0 0 1px #d0d0d0;"></div>
<div class="t" style="left:1868.00px;top:375.19px;font-size:11px;color:#8a8a8a;">5,7</div>
<div class="t" style="left:1570.00px;top:405.69px;font-size:11px;color:#000;">Fan</div>
<div class="r" style="left:1653px;top:401px;width:245px;height:20px;background:linear-gradient(#f2f2f2,#e4e4e4);box-shadow:inset 0 0 0 1px #acacac;"></div>
<div class="t" style="left:1659.50px;top:405.19px;font-size:11px;color:#000;">On</div>
<svg style="left:1883px;top:408.0px" width="9" height="6"><path d="M1 1.2l3.5 3.3 3.5-3.3" stroke="#555" fill="none" stroke-width="1"/></svg>
<div class="r" style="left:1570px;top:420px;width:328px;height:1px;background:#d8d8d8;"></div>
<div class="r" style="left:1567px;top:429px;width:333px;height:149px;border:1px solid #a9a9a9;border-radius:3px;"></div>
<div class="r" style="left:1569px;top:432px;width:328px;height:19px;background:#e6e6fa;"></div>
<svg style="left:1570px;top:432px" width="20" height="20"><circle cx="9.6" cy="9.5" r="8.2" fill="#fff" stroke="#3a3a3a" stroke-width="1.1"/><path d="M6.1 11.3l3.5-3.4 3.5 3.4" stroke="#333" stroke-width="2" fill="none"/></svg>
<div class="t" style="left:1594.00px;top:435.84px;font-size:12px;color:#000;font-weight:bold;transform:scaleX(0.8639);transform-origin:0 0;">Preprocessing</div>
<div class="r" style="left:1878px;top:437px;width:13px;height:2px;background:#2a2a2a;border-radius:1px;"></div>
<div class="r" style="left:1878px;top:441px;width:13px;height:2px;background:#2a2a2a;border-radius:1px;"></div>
<div class="r" style="left:1878px;top:445px;width:13px;height:2px;background:#2a2a2a;border-radius:1px;"></div>
<div class="t" style="left:1570.00px;top:461.69px;font-size:11px;color:#000;">Subtract Dark</div>
<div class="r" style="left:1651px;top:457px;width:50px;height:23px;background:#e1e1e1;box-shadow:inset 0 0 0 1px #707070;"></div>
<div class="t" style="left:1653.06px;top:462.69px;font-size:11px;color:#000;">Browse...</div>
<div class="r" style="left:1703px;top:458px;width:195px;height:20px;background:linear-gradient(#f2f2f2,#e4e4e4);box-shadow:inset 0 0 0 1px #acacac;"></div>
<div class="t" style="left:1709.00px;top:461.69px;font-size:11px;color:#000;">C:\Users\Steph\Desktop\SharpC...</div>
<svg style="left:1883px;top:465.0px" width="9" height="6"><path d="M1 1.2l3.5 3.3 3.5-3.3" stroke="#555" fill="none" stroke-width="1"/></svg>
<div class="t" style="left:1570.00px;top:492.69px;font-size:11px;color:#000;">Apply Flat</div>
<div class="r" style="left:1651px;top:487px;width:50px;height:23px;background:#e1e1e1;box-shadow:inset 0 0 0 1px #707070;"></div>
<div class="t" style="left:1653.06px;top:492.69px;font-size:11px;color:#000;">Browse...</div>
<div class="r" style="left:1703px;top:488px;width:195px;height:20px;background:linear-gradient(#f2f2f2,#e4e4e4);box-shadow:inset 0 0 0 1px #acacac;"></div>
<div class="t" style="left:1709.00px;top:491.69px;font-size:11px;color:#000;">None</div>
<svg style="left:1883px;top:495.0px" width="9" height="6"><path d="M1 1.2l3.5 3.3 3.5-3.3" stroke="#555" fill="none" stroke-width="1"/></svg>
<div class="t" style="left:1570.00px;top:517.19px;font-size:11px;color:#000;">Banding</div>
<div class="t" style="left:1570.00px;top:529.19px;font-size:11px;color:#000;">Suppression</div>
<div class="r" style="left:1656px;top:525px;width:202px;height:4px;background:#e7eaea;box-shadow:inset 0 0 0 1px #d6d6d6;"></div>
<svg style="left:1650px;top:518px" width="13" height="19"><path d="M0.5 0.5h11v11.5l-5.5 5.5-5.5-5.5z" fill="#f0f0f0" stroke="#a0a0a0"/></svg>
<div class="r" style="left:1656px;top:539px;width:1px;height:3px;background:#000;"></div>
<div class="r" style="left:1677px;top:539px;width:1px;height:3px;background:#000;"></div>
<div class="r" style="left:1697px;top:539px;width:1px;height:3px;background:#000;"></div>
<div class="r" style="left:1717px;top:539px;width:1px;height:3px;background:#000;"></div>
<div class="r" style="left:1737px;top:539px;width:1px;height:3px;background:#000;"></div>
<div class="r" style="left:1757px;top:539px;width:1px;height:3px;background:#000;"></div>
<div class="r" style="left:1777px;top:539px;width:1px;height:3px;background:#000;"></div>
<div class="r" style="left:1797px;top:539px;width:1px;height:3px;background:#000;"></div>
<div class="r" style="left:1817px;top:539px;width:1px;height:3px;background:#000;"></div>
<div class="r" style="left:1837px;top:539px;width:1px;height:3px;background:#000;"></div>
<div class="r" style="left:1857px;top:539px;width:1px;height:3px;background:#000;"></div>
<div class="r" style="left:1865px;top:519px;width:32px;height:21px;background:#fff;box-shadow:inset 0 0 0 1px #a2a2a2;"></div>
<div class="t" style="left:1868.00px;top:524.19px;font-size:11px;color:#000;">0</div>
<div class="t" style="left:1570.00px;top:549.19px;font-size:11px;color:#000;">Banding</div>
<div class="t" style="left:1570.00px;top:561.19px;font-size:11px;color:#000;">Threshold</div>
<div class="r" style="left:1656px;top:557px;width:202px;height:4px;background:#e7eaea;box-shadow:inset 0 0 0 1px #d6d6d6;"></div>
<svg style="left:1826px;top:550px" width="13" height="19"><path d="M0.5 0.5h11v11.5l-5.5 5.5-5.5-5.5z" fill="#f0f0f0" stroke="#cfcfcf"/></svg>
<div class="r" style="left:1656px;top:571px;width:1px;height:3px;background:#000;"></div>
<div class="r" style="left:1682px;top:571px;width:1px;height:3px;background:#000;"></div>
<div class="r" style="left:1707px;top:571px;width:1px;height:3px;background:#000;"></div>
<div class="r" style="left:1732px;top:571px;width:1px;height:3px;background:#000;"></div>
<div class="r" style="left:1757px;top:571px;width:1px;height:3px;background:#000;"></div>
<div class="r" style="left:1782px;top:571px;width:1px;height:3px;background:#000;"></div>
<div class="r" style="left:1807px;top:571px;width:1px;height:3px;background:#000;"></div>
<div class="r" style="left:1832px;top:571px;width:1px;height:3px;background:#000;"></div>
<div class="r" style="left:1857px;top:571px;width:1px;height:3px;background:#000;"></div>
<div class="r" style="left:1865px;top:551px;width:32px;height:21px;background:#f0f0f0;box-shadow:inset 0 0 0 1px #d0d0d0;"></div>
<div class="t" style="left:1868.00px;top:556.19px;font-size:11px;color:#8a8a8a;">35,0</div>
<div class="r" style="left:1567px;top:580px;width:333px;height:55px;border:1px solid #a9a9a9;border-radius:3px;"></div>
<div class="r" style="left:1569px;top:582px;width:328px;height:19px;background:#f0f8ff;"></div>
<svg style="left:1570px;top:582px" width="20" height="20"><circle cx="9.6" cy="9.5" r="8.2" fill="#fff" stroke="#3a3a3a" stroke-width="1.1"/><path d="M6.1 11.3l3.5-3.4 3.5 3.4" stroke="#333" stroke-width="2" fill="none"/></svg>
<div class="t" style="left:1594.00px;top:585.84px;font-size:12px;color:#000;font-weight:bold;transform:scaleX(0.9046);transform-origin:0 0;">Image Controls</div>
<div class="r" style="left:1878px;top:587px;width:13px;height:2px;background:#2a2a2a;border-radius:1px;"></div>
<div class="r" style="left:1878px;top:591px;width:13px;height:2px;background:#2a2a2a;border-radius:1px;"></div>
<div class="r" style="left:1878px;top:595px;width:13px;height:2px;background:#2a2a2a;border-radius:1px;"></div>
<div class="t" style="left:1570.00px;top:607.19px;font-size:11px;color:#000;">Timestamp</div>
<div class="t" style="left:1570.00px;top:619.19px;font-size:11px;color:#000;">Frames</div>
<div class="r" style="left:1653px;top:609px;width:245px;height:20px;background:linear-gradient(#f2f2f2,#e4e4e4);box-shadow:inset 0 0 0 1px #acacac;"></div>
<div class="t" style="left:1659.50px;top:613.19px;font-size:11px;color:#000;">Off</div>
<svg style="left:1883px;top:616.0px" width="9" height="6"><path d="M1 1.2l3.5 3.3 3.5-3.3" stroke="#555" fill="none" stroke-width="1"/></svg>
<div class="r" style="left:1567px;top:637px;width:333px;height:116px;border:1px solid #a9a9a9;border-radius:3px;"></div>
<div class="r" style="left:1569px;top:640px;width:328px;height:19px;background:#ffb6c1;"></div>
<svg style="left:1570px;top:640px" width="20" height="20"><circle cx="9.6" cy="9.5" r="8.2" fill="#fff" stroke="#3a3a3a" stroke-width="1.1"/><path d="M6.1 11.3l3.5-3.4 3.5 3.4" stroke="#333" stroke-width="2" fill="none"/></svg>
<div class="t" style="left:1594.00px;top:643.84px;font-size:12px;color:#000;font-weight:bold;transform:scaleX(0.8799);transform-origin:0 0;">Display Histogram Stretch</div>
<div class="r" style="left:1878px;top:645px;width:13px;height:2px;background:#2a2a2a;border-radius:1px;"></div>
<div class="r" style="left:1878px;top:649px;width:13px;height:2px;background:#2a2a2a;border-radius:1px;"></div>
<div class="r" style="left:1878px;top:653px;width:13px;height:2px;background:#2a2a2a;border-radius:1px;"></div>
<div class="r" style="left:1568px;top:661px;width:331px;height:90px;background:#000;"></div>
<svg style="left:1568px;top:661px" width="331" height="90" viewBox="1568 661 331 90"><path d="M1649 662V751" stroke="#8c8410" stroke-width="2" stroke-dasharray="6 4"/><path d="M1714 662V751" stroke="#8c8410" stroke-width="2" stroke-dasharray="6 4"/><path d="M1871 662V751" stroke="#8c8410" stroke-width="2" stroke-dasharray="6 4"/><path d="M1569.0 735.8 L1572.0 724.0 L1574.2 729.0 L1576.5 734.3 L1578.7 739.4 L1581.0 736.7 L1583.2 734.4 L1585.5 732.8 L1587.7 730.1 L1590.0 727.8 L1592.5 725.9 L1595.0 723.0 L1597.5 720.9 L1600.0 726.8 L1602.5 733.2 L1605.0 739.0 L1607.0 734.7 L1609.0 730.3 L1611.0 725.3 L1613.0 720.9 L1615.0 716.1 L1617.6 721.6 L1620.2 728.0 L1622.8 733.8 L1625.2 727.9 L1627.6 722.1 L1630.0 717.2 L1632.0 722.5 L1634.0 728.3 L1636.0 734.0 L1638.8 718.0 L1641.5 702.3 L1643.7 694.6 L1645.8 687.6 L1648.0 680.0 L1650.5 673.8 L1653.0 667.3 L1655.2 664.4 L1657.5 662.2 L1659.7 669.1 L1661.8 676.5 L1664.0 682.9 L1666.8 692.6 L1669.7 701.7 L1672.1 704.9 L1674.6 707.9 L1677.0 710.9 L1679.1 712.1 L1681.2 713.1 L1683.3 714.3 L1685.4 715.1 L1687.5 716.3 L1689.5 717.3 L1691.6 718.4 L1693.7 719.1 L1695.8 719.7 L1697.9 721.3 L1700.0 722.4 L1702.0 722.8 L1704.0 723.0 L1706.0 723.5 L1708.0 723.6 L1710.0 724.5 L1712.0 724.8 L1714.0 725.0 L1716.0 725.3 L1718.0 726.3 L1720.0 726.9 L1722.0 726.6 L1724.0 727.6 L1726.0 727.8 L1728.0 728.0 L1730.0 728.6 L1732.0 729.4 L1734.0 729.9 L1736.0 729.7 L1738.0 730.6 L1740.0 730.6 L1742.0 731.4 L1744.0 731.4 L1746.0 732.1 L1748.0 732.5 L1750.0 732.3 L1752.0 733.0 L1754.0 732.7 L1756.0 732.8 L1758.0 733.5 L1760.0 733.3 L1762.0 733.7 L1764.0 734.1 L1766.0 734.6 L1768.0 734.5 L1770.0 734.6 L1772.0 735.6 L1774.0 735.4 L1776.0 736.2 L1778.0 736.4 L1780.0 736.2 L1782.0 736.6 L1784.0 736.9 L1786.0 737.2 L1788.0 737.5 L1790.0 737.7 L1792.0 738.0 L1794.0 738.6 L1796.0 738.5 L1798.0 738.7 L1800.0 739.2 L1802.0 739.0 L1804.0 739.3 L1806.0 740.1 L1808.0 739.9 L1810.0 740.2 L1812.0 740.0 L1814.0 740.5 L1816.0 740.9 L1818.0 740.7 L1820.0 741.4 L1822.0 741.6 L1824.0 741.4 L1826.0 742.1 L1828.0 742.2 L1830.0 742.6 L1832.0 742.5 L1834.0 743.1 L1836.0 743.3 L1838.0 743.0 L1840.0 743.2 L1842.0 743.9 L1844.0 744.4 L1846.0 744.1 L1848.0 744.5 L1850.0 744.8 L1852.0 744.8 L1854.0 745.1 L1856.0 745.3 L1858.0 745.5 L1860.0 745.9 L1862.0 745.9 L1864.0 746.2 L1866.0 746.8 L1868.0 746.4 L1870.0 747.0" stroke="#fff" stroke-width="2" fill="none"/><path d="M1569.0 734.1 L1571.0 730.8 L1573.0 726.8 L1575.5 729.7 L1578.0 733.4 L1580.0 731.2 L1582.0 729.6 L1584.0 728.4 L1586.0 727.2 L1588.0 725.0 L1590.0 723.8 L1592.3 721.8 L1594.7 720.4 L1597.0 717.9 L1599.0 722.2 L1601.0 725.1 L1603.0 729.1 L1605.0 733.2 L1607.0 730.5 L1609.0 726.9 L1611.0 723.7 L1613.0 720.5 L1615.0 718.0 L1617.3 720.3 L1619.7 723.7 L1622.0 726.4 L1624.0 723.6 L1626.0 721.7 L1628.0 720.4 L1630.0 718.2 L1632.3 721.0 L1634.6 723.1 L1636.9 725.6 L1639.7 710.8 L1642.0 697.4 L1644.3 682.7 L1647.2 675.3 L1650.0 667.9 L1652.5 665.8 L1655.0 663.6 L1657.5 662.1 L1660.2 664.9 L1663.0 668.4 L1665.4 678.9 L1667.8 688.3 L1670.2 695.4 L1672.5 701.8 L1674.8 705.2 L1677.2 708.0 L1679.5 709.9 L1681.8 713.3 L1683.8 714.4 L1685.8 715.2 L1687.8 716.0 L1689.9 716.7 L1691.9 717.8 L1693.9 718.7 L1695.9 719.5 L1697.9 721.1 L1699.9 721.7 L1701.9 723.4 L1704.0 723.5 L1706.0 725.5 L1708.0 726.2 L1710.0 727.5 L1712.0 728.0 L1714.0 728.4 L1716.0 728.5 L1718.0 728.3 L1720.0 729.7 L1722.0 729.5 L1724.0 730.1 L1726.0 731.0 L1728.0 731.3 L1730.0 731.7 L1732.0 732.8 L1734.0 732.9 L1736.0 733.0 L1738.0 733.4 L1740.0 734.4 L1742.0 734.1 L1744.0 734.7 L1746.0 734.5 L1748.0 734.5 L1750.0 735.2 L1752.0 735.7 L1754.0 735.2 L1756.0 736.2 L1758.0 736.6 L1760.0 736.7 L1762.0 736.9 L1764.0 736.2 L1766.0 737.2 L1768.0 737.7 L1770.0 736.9 L1772.0 737.4 L1774.0 737.7 L1776.0 738.2 L1778.0 738.3 L1780.0 738.6 L1782.0 739.2 L1784.0 738.5 L1786.0 738.8 L1788.0 739.1 L1790.0 739.4 L1792.0 739.5 L1794.0 740.9 L1796.0 741.0 L1798.0 740.3 L1800.0 741.0 L1802.0 741.0 L1804.0 741.1 L1806.0 741.3 L1808.0 741.9 L1810.0 742.0 L1812.0 741.9 L1814.0 741.8 L1816.0 742.2 L1818.0 742.1 L1820.0 742.8 L1822.0 743.1 L1824.0 742.9 L1826.0 742.7 L1828.0 743.0 L1830.0 743.4 L1832.0 743.9 L1834.0 744.3 L1836.0 743.9 L1838.0 744.6 L1840.0 744.6 L1842.0 744.5 L1844.0 744.6 L1846.0 744.9 L1848.0 745.4 L1850.0 745.2 L1852.0 745.7 L1854.0 745.6 L1856.0 745.5 L1858.0 746.0 L1860.0 746.4 L1862.0 745.8 L1864.0 746.4 L1866.0 746.6 L1868.0 747.3 L1870.0 747.0" stroke="#0a8a0a" stroke-width="2" fill="none"/><path d="M1569.0 730.5 L1571.0 729.5 L1573.0 729.7 L1575.0 729.2 L1577.0 728.2 L1579.0 728.1 L1581.0 727.3 L1583.0 727.8 L1585.0 727.2 L1587.0 726.1 L1589.0 724.7 L1591.0 723.2 L1593.0 721.9 L1595.0 720.4 L1597.0 718.5 L1599.2 719.6 L1601.3 719.4 L1603.5 720.1 L1605.7 721.3 L1607.8 721.0 L1610.0 721.5 L1612.2 720.5 L1614.5 720.5 L1616.7 718.6 L1618.9 717.4 L1621.1 717.4 L1623.4 715.5 L1625.6 715.4 L1627.9 710.2 L1630.3 705.4 L1632.7 700.5 L1635.0 695.1 L1637.2 690.5 L1639.5 684.7 L1641.8 680.8 L1644.0 675.6 L1646.0 673.0 L1648.0 669.4 L1650.0 667.3 L1652.8 666.2 L1655.6 663.9 L1659.0 667.8 L1661.0 672.4 L1663.0 677.0 L1665.4 683.3 L1667.8 690.2 L1670.2 696.8 L1672.5 703.8 L1675.0 706.4 L1677.5 708.4 L1680.0 710.8 L1682.2 712.1 L1684.4 713.2 L1686.6 714.4 L1688.8 715.2 L1691.0 716.9 L1693.1 718.3 L1695.2 718.5 L1697.3 719.7 L1699.4 719.8 L1701.6 721.3 L1703.7 722.2 L1705.8 722.9 L1707.9 723.6 L1710.0 724.4 L1712.0 725.0 L1714.0 725.7 L1716.0 725.2 L1718.0 725.5 L1720.0 726.7 L1722.0 727.3 L1724.0 727.2 L1726.0 727.5 L1728.0 728.3 L1730.0 728.0 L1732.0 728.5 L1734.0 728.8 L1736.0 729.7 L1738.0 729.8 L1740.0 729.9 L1742.0 730.7 L1744.0 731.3 L1746.0 730.8 L1748.0 731.5 L1750.0 731.4 L1752.0 732.2 L1754.0 732.2 L1756.0 732.0 L1758.0 732.2 L1760.0 732.3 L1762.0 733.1 L1764.0 733.2 L1766.0 733.2 L1768.0 733.7 L1770.0 733.9 L1772.0 734.7 L1774.0 734.2 L1776.0 735.5 L1778.0 735.1 L1780.0 735.5 L1782.0 735.6 L1784.0 736.3 L1786.0 736.6 L1788.0 736.5 L1790.0 736.7 L1792.0 737.2 L1794.0 737.7 L1796.0 737.4 L1798.0 738.0 L1800.0 738.6 L1802.0 738.2 L1804.0 738.1 L1806.0 738.3 L1808.0 739.1 L1810.0 739.2 L1812.0 739.8 L1814.0 739.8 L1816.0 739.3 L1818.0 739.4 L1820.0 739.7 L1822.0 739.8 L1824.0 740.6 L1826.0 741.0 L1828.0 741.3 L1830.0 740.7 L1832.0 741.6 L1834.0 741.2 L1836.0 741.5 L1838.0 742.1 L1840.0 741.5 L1842.0 741.7 L1844.0 742.8 L1846.0 742.4 L1848.0 742.6 L1850.0 743.1 L1852.0 743.4 L1854.0 742.8 L1856.0 743.4 L1858.0 743.7 L1860.0 744.0 L1862.0 743.9 L1864.0 744.5 L1866.0 745.1 L1868.0 744.7 L1870.0 745.0" stroke="#ff1010" stroke-width="2" fill="none"/><path d="M1569.0 733.1 L1571.2 731.9 L1573.4 731.5 L1575.6 731.4 L1577.8 730.1 L1580.0 730.5 L1582.1 729.5 L1584.2 727.5 L1586.4 727.5 L1588.5 725.8 L1590.6 725.3 L1592.8 724.3 L1594.9 722.8 L1597.0 722.2 L1599.2 722.7 L1601.3 723.4 L1603.5 723.2 L1605.7 724.3 L1607.8 725.1 L1610.0 725.2 L1612.2 724.7 L1614.5 723.8 L1616.7 723.9 L1618.9 723.4 L1621.1 723.5 L1623.4 723.1 L1625.6 722.6 L1628.1 720.9 L1630.5 720.1 L1633.0 718.9 L1635.2 711.7 L1637.5 706.0 L1639.7 699.2 L1642.0 693.4 L1644.3 689.2 L1646.7 683.1 L1649.0 678.2 L1651.0 675.2 L1653.0 671.6 L1655.0 668.1 L1657.0 667.0 L1659.0 665.5 L1661.0 664.2 L1663.2 666.3 L1665.3 668.5 L1667.5 671.6 L1669.7 674.0 L1672.5 683.2 L1675.3 692.8 L1678.2 701.6 L1681.0 710.7 L1683.0 712.6 L1685.0 714.9 L1687.0 715.7 L1689.0 718.0 L1691.0 719.4 L1693.1 721.2 L1695.2 721.8 L1697.3 722.9 L1699.4 724.2 L1701.6 725.5 L1703.7 726.9 L1705.8 727.5 L1707.9 729.3 L1710.0 729.5 L1712.0 730.3 L1714.0 730.6 L1716.0 731.1 L1718.0 732.5 L1720.0 733.0 L1722.0 732.8 L1724.0 733.4 L1726.0 734.2 L1728.0 735.1 L1730.0 735.7 L1732.0 736.2 L1734.0 736.5 L1736.0 736.5 L1738.0 737.4 L1740.0 737.4 L1742.0 738.0 L1744.0 738.3 L1746.0 738.1 L1748.0 738.4 L1750.0 739.3 L1752.0 738.6 L1754.0 739.8 L1756.0 740.1 L1758.0 740.5 L1760.0 740.0 L1762.0 740.5 L1764.0 740.7 L1766.0 741.0 L1768.0 741.7 L1770.0 741.6 L1772.0 741.4 L1774.0 742.3 L1776.0 742.1 L1778.0 742.5 L1780.0 742.9 L1782.0 742.2 L1784.0 743.4 L1786.0 743.5 L1788.0 743.5 L1790.0 743.8 L1792.0 744.0 L1794.0 743.9 L1796.0 744.6 L1798.0 744.2 L1800.0 745.0 L1802.0 745.3 L1804.0 745.2 L1806.0 745.4 L1808.0 746.0 L1810.0 746.0 L1812.0 745.2 L1814.0 746.2 L1816.0 746.1 L1818.0 745.5 L1820.0 746.0 L1822.0 745.9 L1824.0 745.9 L1826.0 746.5 L1828.0 747.1 L1830.0 746.5 L1832.0 747.3 L1834.0 747.2 L1836.0 746.6 L1838.0 747.6 L1840.0 747.4 L1842.0 747.9 L1844.0 747.8 L1846.0 747.9 L1848.0 747.6 L1850.0 748.2 L1852.0 748.5 L1854.0 748.5 L1856.0 748.1 L1858.0 748.6 L1860.0 748.4 L1862.0 748.1 L1864.0 748.1 L1866.0 748.3 L1868.0 748.5 L1870.0 749.0" stroke="#1010ff" stroke-width="2" fill="none"/><path d="M1569 686V735" stroke="#1010ff" stroke-width="1"/><path d="M1648 751 C1665 733 1690 716 1714 704 C1760 685 1820 668 1871 661" stroke="#e8e000" stroke-width="1.3" fill="none"/></svg>
<div class="r" style="left:1873px;top:662px;width:25px;height:24px;background:#e1e1e1;box-shadow:inset 0 0 0 1px #cfcfcf;"></div>
<div class="r" style="left:1873px;top:689px;width:25px;height:24px;background:#e1e1e1;box-shadow:inset 0 0 0 1px #cfcfcf;"></div>
<div class="r" style="left:1873px;top:716px;width:25px;height:24px;background:#e1e1e1;box-shadow:inset 0 0 0 1px #cfcfcf;"></div>
<svg style="left:1873px;top:662px" width="25" height="24"><path d="M15.5 3.8 L4.2 13.5 H11 L7.6 20.8 L20.8 11 H14 Z" fill="none" stroke="#1a1a1a" stroke-width="1.3" stroke-linejoin="round"/></svg>
<svg style="left:1873px;top:689px" width="25" height="24"><path d="M8 9.5 A6 6 0 1 1 7.5 15" fill="none" stroke="#222" stroke-width="1.3"/><path d="M5 9 L9 12 L9.5 6.5" fill="none" stroke="#222" stroke-width="1.2"/></svg>
<svg style="left:1873px;top:716px" width="25" height="24"><path d="M7 7h9l3 3v9h-12z" fill="#3a3a3a"/><rect x="10" y="7" width="5" height="3" fill="#e1e1e1"/></svg>
<div class="r" style="left:1567px;top:755px;width:333px;height:259px;border:1px solid #a9a9a9;border-radius:3px;"></div>
<div class="r" style="left:1569px;top:757px;width:328px;height:19px;background:#fffacd;"></div>
<svg style="left:1570px;top:757px" width="20" height="20"><circle cx="9.6" cy="9.5" r="8.2" fill="#fff" stroke="#3a3a3a" stroke-width="1.1"/><path d="M6.1 11.3l3.5-3.4 3.5 3.4" stroke="#333" stroke-width="2" fill="none"/></svg>
<div class="t" style="left:1594.00px;top:760.84px;font-size:12px;color:#000;font-weight:bold;transform:scaleX(0.9700);transform-origin:0 0;">Scope Controls</div>
<div class="r" style="left:1878px;top:762px;width:13px;height:2px;background:#2a2a2a;border-radius:1px;"></div>
<div class="r" style="left:1878px;top:766px;width:13px;height:2px;background:#2a2a2a;border-radius:1px;"></div>
<div class="r" style="left:1878px;top:770px;width:13px;height:2px;background:#2a2a2a;border-radius:1px;"></div>
<div class="r" style="left:1570px;top:780px;width:328px;height:122px;border:1px solid #b9b9b9;border-radius:3px;"></div>
<div class="t" style="left:1573.50px;top:782.19px;font-size:11px;color:#000;transform:scaleX(0.9849);transform-origin:0 0;">POTH Hub</div>
<div class="r" style="left:1817px;top:782px;width:14px;height:14px;background:#fff;box-shadow:inset 0 0 0 1px #333;"></div>
<svg style="left:1817px;top:782px" width="14" height="14"><path d="M3 7.2l2.6 3 5.4-6.4" stroke="#000" stroke-width="1.8" fill="none"/></svg>
<div class="t" style="left:1836.00px;top:782.69px;font-size:11px;color:#000;">Connected</div>
<div class="t" style="left:1600.50px;top:802.84px;font-size:12px;color:#111;font-family:'Liberation Mono', monospace;letter-spacing:0.4px;">Az</div>
<div class="t" style="left:1630.70px;top:802.84px;font-size:12px;color:#111;font-family:'Liberation Mono', monospace;letter-spacing:0.4px;">154:15:00</div>
<div class="t" style="left:1598.00px;top:828.34px;font-size:12px;color:#111;font-family:'Liberation Mono', monospace;letter-spacing:0.4px;">Alt</div>
<div class="t" style="left:1630.70px;top:828.34px;font-size:12px;color:#111;font-family:'Liberation Mono', monospace;letter-spacing:0.4px;">+55:08:18</div>
<div class="t" style="left:1600.50px;top:853.84px;font-size:12px;color:#111;font-family:'Liberation Mono', monospace;letter-spacing:0.4px;">RA</div>
<div class="t" style="left:1630.70px;top:853.84px;font-size:12px;color:#111;font-family:'Liberation Mono', monospace;letter-spacing:0.4px;">12:28:20</div>
<div class="t" style="left:1598.00px;top:879.34px;font-size:12px;color:#111;font-family:'Liberation Mono', monospace;letter-spacing:0.4px;">Dec</div>
<div class="t" style="left:1630.70px;top:879.34px;font-size:12px;color:#111;font-family:'Liberation Mono', monospace;letter-spacing:0.4px;">13:00:55N</div>
<div class="r" style="left:1732px;top:796px;width:35px;height:35px;background:#dcdcdc;box-shadow:inset 0 0 0 1px #6e6e6e;box-shadow:inset 0 0 0 1px #6e6e6e;"></div>
<div class="r" style="left:1766px;top:796px;width:35px;height:35px;background:#dcdcdc;box-shadow:inset 0 0 0 1px #6e6e6e;box-shadow:inset 0 0 0 1px #6e6e6e;"></div>
<div class="r" style="left:1732px;top:830px;width:35px;height:35px;background:#dcdcdc;box-shadow:inset 0 0 0 1px #6e6e6e;box-shadow:inset 0 0 0 1px #6e6e6e;"></div>
<div class="r" style="left:1766px;top:830px;width:35px;height:35px;background:#dcdcdc;box-shadow:inset 0 0 0 1px #6e6e6e;box-shadow:inset 0 0 0 1px #6e6e6e;"></div>
<div class="r" style="left:1800px;top:831px;width:35px;height:34px;background:#dcdcdc;box-shadow:inset 0 0 0 1px #6e6e6e;box-shadow:inset 0 0 0 1px #6e6e6e;"></div>
<div class="r" style="left:1732px;top:864px;width:35px;height:36px;background:#dcdcdc;box-shadow:inset 0 0 0 1px #6e6e6e;box-shadow:inset 0 0 0 1px #6e6e6e;"></div>
<div class="r" style="left:1766px;top:864px;width:35px;height:36px;background:#dcdcdc;box-shadow:inset 0 0 0 1px #6e6e6e;box-shadow:inset 0 0 0 1px #6e6e6e;"></div>
<svg style="left:1732px;top:796px" width="35" height="35"><path d="M13.5 26.5H27.5V10.5H10.5V22.5H22.5V15.5H15.5V19" fill="none" stroke="#000" stroke-width="2"/></svg>
<svg style="left:1766px;top:796px" width="35" height="35"><path d="M17.5 2L30 15H22V30H13V15H5z" fill="#000"/></svg>
<svg style="left:1732px;top:830px" width="35" height="35"><path d="M2 17L15 4V13H31V22H15V31z" fill="#000"/></svg>
<svg style="left:1766px;top:830px" width="35" height="35"><circle cx="17.5" cy="17" r="14.8" fill="#f00"/><text x="17.5" y="21.5" font-family="Liberation Sans" font-weight="bold" font-size="10.5" fill="#fff" text-anchor="middle" textLength="29" lengthAdjust="spacingAndGlyphs">STOP</text></svg>
<svg style="left:1800px;top:831px" width="35" height="34"><path d="M33 16.5L20 3V12H3V21H20V30z" fill="#000"/></svg>
<svg style="left:1732px;top:864px" width="35" height="36"><circle cx="17" cy="18" r="8.5" fill="none" stroke="#000" stroke-width="2"/><circle cx="17" cy="18" r="5.5" fill="#000"/><path d="M17 2.5v6M17 27.5v6M2 18h6.5M25.5 18h7" stroke="#000" stroke-width="2"/></svg>
<svg style="left:1766px;top:864px" width="35" height="36"><path d="M17.5 34L30 20H22V4H13V20H5z" fill="#000"/></svg>
<div class="t" style="left:1809.50px;top:801.19px;font-size:11px;color:#000;">Rate:</div>
<div class="r" style="left:1840px;top:798px;width:50px;height:19px;background:linear-gradient(#f2f2f2,#e4e4e4);box-shadow:inset 0 0 0 1px #acacac;"></div>
<div class="t" style="left:1847.00px;top:800.84px;font-size:12px;color:#000;">16x</div>
<svg style="left:1875px;top:804.5px" width="9" height="6"><path d="M1 1.2l3.5 3.3 3.5-3.3" stroke="#555" fill="none" stroke-width="1"/></svg>
<div class="r" style="left:1841px;top:823px;width:50px;height:22px;background:#e1e1e1;box-shadow:inset 0 0 0 1px #adadad;"></div>
<div class="t" style="left:1851.61px;top:828.69px;font-size:11px;color:#000;">Setup</div>
<div class="r" style="left:1842px;top:854px;width:14px;height:14px;background:#fff;box-shadow:inset 0 0 0 1px #333;"></div>
<div class="t" style="left:1861.00px;top:853.69px;font-size:11px;color:#000;">Park</div>
<div class="r" style="left:1804px;top:874px;width:46px;height:23px;background:#cce4f7;box-shadow:inset 0 0 0 1px #0a5aa0;"></div>
<div class="t" style="left:1806.00px;top:879.69px;font-size:11px;color:#000;transform:scaleX(1.0052);transform-origin:0 0;">Tracking</div>
<div class="r" style="left:1854px;top:874px;width:38px;height:23px;background:#e8e8e8;box-shadow:inset 0 0 0 1px #d4d4d4;"></div>
<div class="r" style="left:1855px;top:875px;width:20px;height:21px;background:#d0d0d0;"></div>
<svg style="left:1856px;top:876px" width="18" height="18"><path d="M9 1.5l2.2 5.6 6 .3-4.7 3.8 1.6 5.8L9 13.7 3.9 17l1.6-5.8L.8 7.4l6-.3z" fill="#000"/></svg>
<svg style="left:1878px;top:882px" width="9" height="6"><path d="M1 1.2l3.5 3.3 3.5-3.3" stroke="#555" fill="none" stroke-width="1"/></svg>
<div class="r" style="left:1570px;top:905px;width:328px;height:107px;border:1px solid #b9b9b9;border-radius:3px;"></div>
<div class="t" style="left:1571.00px;top:908.19px;font-size:11px;color:#000;transform:scaleX(0.9849);transform-origin:0 0;">POTH Hub</div>
<div class="r" style="left:1817px;top:907px;width:14px;height:14px;background:#fff;box-shadow:inset 0 0 0 1px #333;"></div>
<svg style="left:1817px;top:907px" width="14" height="14"><path d="M3 7.2l2.6 3 5.4-6.4" stroke="#000" stroke-width="1.8" fill="none"/></svg>
<div class="t" style="left:1836.00px;top:908.19px;font-size:11px;color:#000;">Connected</div>
<div class="t" style="left:1666.77px;top:926.69px;font-size:11px;color:#000;">Coarse</div>
<div class="t" style="left:1749.30px;top:926.69px;font-size:11px;color:#000;">Fine</div>
<div class="t" style="left:1827.42px;top:926.69px;font-size:11px;color:#000;">Position</div>
<div class="r" style="left:1649px;top:944px;width:71px;height:21px;background:#e1e1e1;box-shadow:inset 0 0 0 1px #adadad;"></div>
<div class="t" style="left:1679.91px;top:948.19px;font-size:11px;color:#000;">In</div>
<div class="r" style="left:1724px;top:944px;width:72px;height:21px;background:#e1e1e1;box-shadow:inset 0 0 0 1px #adadad;"></div>
<div class="t" style="left:1755.41px;top:948.19px;font-size:11px;color:#000;">In</div>
<div class="r" style="left:1802px;top:944px;width:90px;height:21px;background:#fff;box-shadow:inset 0 0 0 1px #d0d0d0;"></div>
<div class="t" style="left:1864.00px;top:948.19px;font-size:11px;color:#000;">6282</div>
<div class="t" style="left:1584.88px;top:972.69px;font-size:11px;color:#000;">Step Size</div>
<div class="r" style="left:1649px;top:967px;width:71px;height:20px;background:#fff;box-shadow:inset 0 0 0 1px #bdbdbd;"></div>
<div class="t" style="left:1680.62px;top:972.69px;font-size:11px;color:#000;">100</div>
<div class="r" style="left:1702px;top:968px;width:17px;height:18px;background:#f0f0f0;box-shadow:inset 0 0 0 1px #c8c8c8;"></div>
<svg style="left:1702px;top:968px" width="17" height="18"><path d="M4.5 7.5l4-4 4 4M4.5 11l4 4 4-4" stroke="#222" fill="none" stroke-width="1.4"/></svg>
<div class="r" style="left:1724px;top:967px;width:72px;height:20px;background:#fff;box-shadow:inset 0 0 0 1px #bdbdbd;"></div>
<div class="t" style="left:1762.75px;top:972.69px;font-size:11px;color:#000;">25</div>
<div class="r" style="left:1778px;top:968px;width:17px;height:18px;background:#f0f0f0;box-shadow:inset 0 0 0 1px #c8c8c8;"></div>
<svg style="left:1778px;top:968px" width="17" height="18"><path d="M4.5 7.5l4-4 4 4M4.5 11l4 4 4-4" stroke="#222" fill="none" stroke-width="1.4"/></svg>
<div class="r" style="left:1802px;top:967px;width:90px;height:20px;background:#eaeaea;box-shadow:inset 0 0 0 1px #d4d4d4;"></div>
<div class="t" style="left:1835.67px;top:972.69px;font-size:11px;color:#8d8d8d;">Stop</div>
<div class="r" style="left:1572px;top:992px;width:14px;height:14px;background:#fff;box-shadow:inset 0 0 0 1px #333;"></div>
<div class="t" style="left:1591.50px;top:992.69px;font-size:11px;color:#000;">Reverse</div>
<div class="r" style="left:1649px;top:990px;width:71px;height:19px;background:#e1e1e1;box-shadow:inset 0 0 0 1px #adadad;"></div>
<div class="t" style="left:1675.62px;top:993.69px;font-size:11px;color:#000;">Out</div>
<div class="r" style="left:1724px;top:990px;width:72px;height:19px;background:#e1e1e1;box-shadow:inset 0 0 0 1px #adadad;"></div>
<div class="t" style="left:1751.12px;top:993.69px;font-size:11px;color:#000;">Out</div>
<div class="r" style="left:1802px;top:990px;width:90px;height:19px;background:#e1e1e1;box-shadow:inset 0 0 0 1px #707070;"></div>
<div class="t" style="left:1832.61px;top:993.69px;font-size:11px;color:#000;">Setup</div>
<div class="r" style="left:0px;top:779px;width:1560px;height:237px;background:#f0f0f0;"></div>
<div class="r" style="left:0px;top:779px;width:1560px;height:18px;background:linear-gradient(#dbe6f3,#c4d3e3);"></div>
<div class="t" style="left:6.00px;top:782.34px;font-size:12px;color:#000;transform:scaleX(0.9396);transform-origin:0 0;">Live Stack</div>
<svg style="left:1528px;top:783px" width="10" height="12"><rect x="2.5" y="0.5" width="5" height="6" fill="#fff" stroke="#000"/><rect x="5.5" y="0.5" width="2" height="6" fill="#000"/><path d="M0.5 7.5h9M5 7.5v4" stroke="#000" stroke-width="1.2"/></svg>
<svg style="left:1544px;top:782px" width="12" height="12"><path d="M1.5 1.5l8 8M9.5 1.5l-8 8" stroke="#000" stroke-width="1.4"/></svg>
<div class="r" style="left:1559px;top:779px;width:1px;height:237px;background:#a0a0a0;"></div>
<div class="r" style="left:2px;top:806px;width:167px;height:58px;border:1px solid #dcdcdc;border-radius:3px;"></div>
<div class="r" style="left:7px;top:797.5px;width:49px;height:12px;background:#f0f0f0;"></div>
<div class="t" style="left:9.00px;top:798.19px;font-size:11px;color:#000;transform:scaleX(0.9816);transform-origin:0 0;">Overview</div>
<div class="t" style="left:8.00px;top:813.19px;font-size:11px;color:#000;">Frames Stacked:</div>
<div class="t" style="left:95.00px;top:813.19px;font-size:11px;color:#000;">4</div>
<div class="t" style="left:8.00px;top:829.19px;font-size:11px;color:#000;">Frames Ignored:</div>
<div class="t" style="left:95.00px;top:829.19px;font-size:11px;color:#000;">0</div>
<div class="t" style="left:8.00px;top:845.19px;font-size:11px;color:#000;">Total Exposure:</div>
<div class="t" style="left:96.00px;top:845.19px;font-size:11px;color:#000;">120,00s</div>
<div class="r" style="left:2px;top:875px;width:167px;height:66px;border:1px solid #dcdcdc;border-radius:3px;"></div>
<div class="r" style="left:7px;top:866.5px;width:40px;height:12px;background:#f0f0f0;"></div>
<div class="t" style="left:9.00px;top:867.19px;font-size:11px;color:#000;">Actions</div>
<div class="r" style="left:11px;top:882px;width:70px;height:23px;background:#e1e1e1;box-shadow:inset 0 0 0 1px #adadad;"></div>
<div class="t" style="left:32.86px;top:888.19px;font-size:11px;color:#000;">Clear</div>
<div class="r" style="left:90px;top:882px;width:70px;height:23px;background:#e1e1e1;box-shadow:inset 0 0 0 1px #adadad;"></div>
<div class="t" style="left:102.45px;top:888.19px;font-size:11px;color:#000;">Save</div>
<div class="r" style="left:141px;top:883px;width:1px;height:21px;background:#adadad;"></div>
<svg style="left:145px;top:890px" width="10" height="7"><path d="M1.5 1.5l3.5 3.5 3.5-3.5" stroke="#000" stroke-width="1.6" fill="none"/></svg>
<div class="r" style="left:11px;top:911px;width:70px;height:23px;background:#e1e1e1;box-shadow:inset 0 0 0 1px #adadad;"></div>
<div class="t" style="left:30.39px;top:917.19px;font-size:11px;color:#000;">Pause</div>
<div class="r" style="left:172px;top:806px;width:166px;height:149px;border:1px solid #dcdcdc;border-radius:3px;"></div>
<div class="r" style="left:177px;top:797.5px;width:46px;height:12px;background:#f0f0f0;"></div>
<div class="t" style="left:179.00px;top:798.19px;font-size:11px;color:#000;transform:scaleX(1.0252);transform-origin:0 0;">Controls</div>
<div class="r" style="left:179px;top:813px;width:14px;height:14px;background:#fff;box-shadow:inset 0 0 0 1px #333;"></div>
<svg style="left:179px;top:813px" width="14" height="14"><path d="M3 7.2l2.6 3 5.4-6.4" stroke="#000" stroke-width="1.8" fill="none"/></svg>
<div class="t" style="left:198.00px;top:813.69px;font-size:11px;color:#000;">Align Frames</div>
<div class="r" style="left:179px;top:832px;width:14px;height:14px;background:#fff;box-shadow:inset 0 0 0 1px #333;"></div>
<div class="t" style="left:198.00px;top:833.19px;font-size:11px;color:#000;">FWHM Filter</div>
<div class="r" style="left:179px;top:852px;width:14px;height:14px;background:#fff;box-shadow:inset 0 0 0 1px #333;"></div>
<div class="t" style="left:198.00px;top:852.69px;font-size:11px;color:#000;">Brightness Filter</div>
<div class="r" style="left:179px;top:871px;width:14px;height:14px;background:#fff;box-shadow:inset 0 0 0 1px #333;"></div>
<div class="t" style="left:198.00px;top:871.69px;font-size:11px;color:#000;">Save Individual Frames</div>
<div class="r" style="left:179px;top:890px;width:14px;height:14px;background:#fff;box-shadow:inset 0 0 0 1px #333;"></div>
<div class="t" style="left:198.00px;top:890.69px;font-size:11px;color:#000;">Auto Save on Clear/Close</div>
<div class="t" style="left:178.00px;top:911.69px;font-size:11px;color:#000;">View</div>
<div class="r" style="left:212px;top:908px;width:120px;height:18px;background:linear-gradient(#f2f2f2,#e4e4e4);box-shadow:inset 0 0 0 1px #acacac;"></div>
<div class="t" style="left:218.00px;top:911.69px;font-size:11px;color:#000;">Stack</div>
<svg style="left:317px;top:914.0px" width="9" height="6"><path d="M1 1.2l3.5 3.3 3.5-3.3" stroke="#555" fill="none" stroke-width="1"/></svg>
<div class="t" style="left:178.00px;top:934.69px;font-size:11px;color:#000;">Stacking</div>
<div class="r" style="left:230px;top:931px;width:102px;height:18px;background:linear-gradient(#f2f2f2,#e4e4e4);box-shadow:inset 0 0 0 1px #acacac;"></div>
<div class="t" style="left:236.00px;top:934.69px;font-size:11px;color:#000;">Sigma Clipping</div>
<svg style="left:317px;top:937.0px" width="9" height="6"><path d="M1 1.2l3.5 3.3 3.5-3.3" stroke="#555" fill="none" stroke-width="1"/></svg>
<div class="r" style="left:2px;top:966px;width:336px;height:36px;border:1px solid #dcdcdc;border-radius:3px;"></div>
<div class="r" style="left:7px;top:957.5px;width:52px;height:12px;background:#f0f0f0;"></div>
<div class="t" style="left:9.00px;top:958.19px;font-size:11px;color:#000;transform:scaleX(0.9802);transform-origin:0 0;">Advanced</div>
<div class="r" style="left:11px;top:978px;width:14px;height:14px;background:#fff;box-shadow:inset 0 0 0 1px #333;"></div>
<div class="t" style="left:30.00px;top:979.69px;font-size:11px;color:#000;">Save and Reset every</div>
<div class="r" style="left:143px;top:975px;width:41px;height:19px;background:#fff;box-shadow:inset 0 0 0 1px #c4c4c4;"></div>
<div class="t" style="left:154.88px;top:979.69px;font-size:11px;color:#777;">5</div>
<div class="r" style="left:166px;top:976px;width:17px;height:17px;background:#f2f2f2;box-shadow:inset 0 0 0 1px #d0d0d0;"></div>
<svg style="left:166px;top:976px" width="17" height="17"><path d="M4.5 7l4-3.5 4 3.5M4.5 10l4 3.5 4-3.5" stroke="#9a9a9a" fill="none" stroke-width="1.2"/></svg>
<div class="t" style="left:187.00px;top:979.19px;font-size:11px;color:#000;">minutes total exposure</div>
<div class="r" style="left:341px;top:815px;width:1219px;height:1px;background:#d9d9d9;"></div>
<div class="r" style="left:342px;top:799px;width:42px;height:17px;background:#ececec;box-shadow:inset 0 0 0 1px #c8c8c8;"></div>
<div class="t" style="left:347.89px;top:801.19px;font-size:11px;color:#000;">Status</div>
<div class="r" style="left:383px;top:797px;width:66px;height:20px;background:#ffffff;box-shadow:inset 1px 1px 0 #c8c8c8, inset -1px 0 0 #c8c8c8;"></div>
<div class="t" style="left:391.44px;top:800.69px;font-size:11px;color:#000;">Histogram</div>
<div class="r" style="left:448px;top:799px;width:61px;height:17px;background:#ececec;box-shadow:inset 0 0 0 1px #c8c8c8;"></div>
<div class="t" style="left:454.53px;top:801.19px;font-size:11px;color:#000;">Alignment</div>
<div class="r" style="left:508px;top:799px;width:55px;height:17px;background:#ececec;box-shadow:inset 0 0 0 1px #c8c8c8;"></div>
<div class="t" style="left:514.89px;top:801.19px;font-size:11px;color:#000;">Stacking</div>
<div class="r" style="left:562px;top:799px;width:82px;height:17px;background:#ececec;box-shadow:inset 0 0 0 1px #c8c8c8;"></div>
<div class="t" style="left:569.53px;top:801.19px;font-size:11px;color:#000;">Enhancement</div>
<div class="r" style="left:643px;top:799px;width:50px;height:17px;background:#ececec;box-shadow:inset 0 0 0 1px #c8c8c8;"></div>
<div class="t" style="left:649.53px;top:801.19px;font-size:11px;color:#000;">Guiding</div>
<div class="r" style="left:692px;top:799px;width:82px;height:17px;background:#ececec;box-shadow:inset 0 0 0 1px #c8c8c8;"></div>
<div class="t" style="left:699.00px;top:801.19px;font-size:11px;color:#000;">Filter (FWHM)</div>
<div class="r" style="left:773px;top:799px;width:99px;height:17px;background:#ececec;box-shadow:inset 0 0 0 1px #c8c8c8;"></div>
<div class="t" style="left:779.59px;top:801.19px;font-size:11px;color:#000;">Filter (Brightness)</div>
<div class="r" style="left:871px;top:799px;width:68px;height:17px;background:#ececec;box-shadow:inset 0 0 0 1px #c8c8c8;"></div>
<div class="t" style="left:878.59px;top:801.19px;font-size:11px;color:#000;">Drift Graph</div>
<div class="r" style="left:938px;top:799px;width:31px;height:17px;background:#ececec;box-shadow:inset 0 0 0 1px #c8c8c8;"></div>
<div class="t" style="left:944.81px;top:801.19px;font-size:11px;color:#000;">Log</div>
<div class="r" style="left:341px;top:815px;width:1218px;height:201px;background:#ffffff;box-shadow:inset 0 0 0 1px #c8c8c8;"></div>
<div class="r" style="left:343px;top:818px;width:1142px;height:195px;background:#000;"></div>
<svg style="left:343px;top:818px" width="1142" height="196" viewBox="343 818 1142 196"><path d="M343 1011.5H1485" stroke="#2424c0" stroke-width="1"/><path d="M343 1012.5H1485" stroke="#555500" stroke-width="1"/><path d="M343.0 1011.0 L572.4 1011.0 L609.0 954.4 L638.7 949.0 L665.0 983.0 L684.0 949.0 L705.0 954.4 L724.0 948.5 L740.0 948.5 L753.8 958.0 L767.7 947.4 L780.0 860.0 L790.4 832.3 L801.0 818.4 L811.3 839.3 L821.8 898.6 L832.3 930.0 L852.0 955.5 L868.0 966.0 L878.0 971.0 L894.0 980.3 L904.4 981.6 L920.0 994.6 L930.4 994.0 L940.8 1002.4 L951.2 999.8 L956.5 1007.6 L964.3 1002.4 L972.0 1010.0 L977.3 1002.4 L987.7 1010.0 L998.0 1007.6 L1008.5 1011.5 L1020.0 1012.0" stroke="#f0f0f0" stroke-width="1.2" fill="none"/><path d="M343.0 1011.0 L609.0 1011.0 L638.7 998.0 L665.0 959.6 L685.8 951.0 L706.7 975.3 L724.0 973.6 L740.0 956.0 L766.0 959.6 L780.0 951.0 L801.0 959.6 L813.0 947.4 L825.3 888.0 L839.0 842.8 L851.4 827.0 L862.0 837.5 L872.4 881.0 L888.8 950.3 L904.4 963.4 L925.0 972.5 L940.8 981.6 L951.2 988.0 L961.7 989.4 L969.5 999.8 L980.0 999.8 L987.7 1007.6 L993.0 999.8 L1000.7 1009.0 L1008.5 1007.6 L1016.3 1010.0 L1022.8 1002.4 L1025.4 1011.5 L1030.0 1012.0" stroke="#118811" stroke-width="1.2" fill="none"/><path d="M343.0 1011.0 L459.0 1011.0 L524.0 1003.0 L572.4 951.6 L609.0 951.6 L638.7 959.6 L665.0 948.0 L684.0 945.0 L705.0 944.0 L724.0 917.8 L738.0 874.0 L753.8 834.0 L767.7 823.0 L780.0 834.0 L790.4 863.7 L801.0 909.0 L811.3 933.5 L825.3 951.0 L847.0 963.4 L862.7 970.6 L878.0 979.0 L891.0 988.9 L899.0 985.5 L909.6 994.6 L920.0 997.2 L925.0 994.6 L935.6 1002.4 L946.0 1007.6 L956.5 1002.4 L966.9 1010.0 L982.5 1007.6 L995.5 1011.5 L1010.0 1012.0" stroke="#ee1111" stroke-width="1.2" fill="none"/><path d="M343.0 1011.0 L459.0 1011.0 L524.0 1001.5 L572.4 951.6 L609.0 951.6 L638.7 959.6 L665.0 946.4 L684.0 947.4 L705.0 944.0 L724.0 917.8 L738.0 874.0 L753.8 834.0 L767.7 823.0 L780.0 834.0 L790.4 863.7 L801.0 909.0 L811.3 936.0 L825.3 955.0 L838.0 968.6 L862.7 979.0 L869.0 986.8 L878.0 986.8 L894.0 1001.0 L904.4 998.5 L911.0 1009.0 L917.4 1002.4 L925.0 1007.6 L935.6 1011.5 L943.4 1007.6 L951.0 1012.0 L1000.0 1012.0" stroke="#2222ee" stroke-width="1.2" fill="none"/><path d="M684 1011 C720 990 790 950 862 914 C930 880 1000 860 1072 841 C1130 828 1200 820 1256 818.5" stroke="#e8e000" stroke-width="1.2" fill="none"/><path d="M684.5 818V1013" stroke="#ffff00" stroke-width="2" stroke-dasharray="6 4"/><path d="M862.5 818V1013" stroke="#ffff00" stroke-width="2" stroke-dasharray="6 4"/><path d="M1256.5 818V1013" stroke="#ffff00" stroke-width="2" stroke-dasharray="6 4"/></svg>
<div class="t" style="left:698px;top:953px;font-size:11px;color:#fff;transform-origin:0 0;transform:rotate(90deg);width:57px;">Black Level</div>
<div class="t" style="left:876px;top:886px;font-size:11px;color:#fff;transform-origin:0 0;transform:rotate(90deg);width:50px;">Mid Level</div>
<div class="t" style="left:1253px;top:818px;font-size:11px;color:#fff;transform-origin:0 0;transform:rotate(90deg);width:60px;">White Level</div>
<div class="r" style="left:1276px;top:823px;width:13px;height:13px;background:#7a7a7a;"></div>
<svg style="left:1276px;top:823px" width="13" height="13"><path d="M2.5 6.5l2.5 3 5-6" stroke="#101010" stroke-width="1.8" fill="none"/></svg>
<div class="t" style="left:1294.00px;top:822.69px;font-size:11px;color:#bdbdbd;">Logarithmic Horizontal Axis</div>
<div class="r" style="left:1432px;top:818px;width:25px;height:25px;background:#6b6b6b;"></div>
<div class="r" style="left:1459px;top:818px;width:25px;height:25px;background:#6b6b6b;"></div>
<svg style="left:1432px;top:818px" width="25" height="25"><path d="M15.5 4 L4.5 13.5 H11 L7.8 21 L20.5 11 H14 Z" fill="none" stroke="#1a1a1a" stroke-width="1.3" stroke-linejoin="round"/></svg>
<svg style="left:1459px;top:818px" width="25" height="25"><path d="M8 9.5 A6 6 0 1 1 7.5 15" fill="none" stroke="#1a1a1a" stroke-width="1.3"/><path d="M5 9 L9 12 L9.5 6.5" fill="none" stroke="#1a1a1a" stroke-width="1.2"/></svg>
<div class="r" style="left:1485px;top:818px;width:73px;height:174px;background:#000;"></div>
<div class="r" style="left:1485px;top:818px;width:18px;height:173px;background:#ff0000;"></div>
<div class="r" style="left:1503px;top:818px;width:18px;height:173px;background:#008000;"></div>
<div class="r" style="left:1521px;top:818px;width:18px;height:173px;background:#0000ff;"></div>
<div class="r" style="left:1539px;top:818px;width:18px;height:173px;background:linear-gradient(90deg,#cc3333 0,#cc3333 33%,#338833 33%,#338833 66%,#3333cc 66%);"></div>
<div class="r" style="left:1539px;top:818px;width:18px;height:173px;background:linear-gradient(rgba(128,128,128,0),rgba(128,128,128,.8))"></div>
<div class="r" style="left:1491px;top:824px;width:5px;height:165px;background:#e6e6e6;"></div>
<div class="r" style="left:1509px;top:824px;width:5px;height:165px;background:#e6e6e6;"></div>
<div class="r" style="left:1527px;top:824px;width:5px;height:165px;background:#e6e6e6;"></div>
<div class="r" style="left:1545px;top:824px;width:5px;height:165px;background:#e6e6e6;"></div>
<div class="r" style="left:1485px;top:888px;width:18px;height:11px;background:#e6e6e6;"></div>
<div class="r" style="left:1503px;top:920px;width:18px;height:11px;background:#e6e6e6;"></div>
<div class="r" style="left:1521px;top:886px;width:18px;height:11px;background:#e6e6e6;"></div>
<div class="r" style="left:1539px;top:901px;width:18px;height:11px;background:#e6e6e6;"></div>
<div class="r" style="left:1485px;top:991px;width:73px;height:23px;background:#f0f0f0;"></div>
<div class="r" style="left:1488px;top:993px;width:20px;height:20px;background:#e1e1e1;box-shadow:inset 0 0 0 1px #adadad;"></div>
<div class="r" style="left:1510px;top:993px;width:20px;height:20px;background:#e1e1e1;box-shadow:inset 0 0 0 1px #adadad;"></div>
<div class="r" style="left:1532px;top:993px;width:20px;height:20px;background:#e1e1e1;box-shadow:inset 0 0 0 1px #adadad;"></div>
<svg style="left:1488px;top:993px" width="20" height="20"><path d="M12 3 L6 10.5 H10 L8 17 L14 9.5 H10 Z" fill="none" stroke="#333" stroke-width="1" stroke-linejoin="round"/></svg>
<svg style="left:1510px;top:993px" width="20" height="20"><path d="M10 3 L11.5 8.5 L17 10 L11.5 11.5 L10 17 L8.5 11.5 L3 10 L8.5 8.5 Z" fill="#111"/></svg>
<svg style="left:1532px;top:993px" width="20" height="20"><path d="M6.5 8 A5 5 0 1 1 6 12.5" fill="none" stroke="#222" stroke-width="1.2"/><path d="M4 7.5 L7.5 10 L8 5" fill="none" stroke="#222" stroke-width="1.1"/></svg>
<div class="r" style="left:0px;top:1017px;width:1920px;height:23px;background:#f0f0f0;"></div>
<div class="r" style="left:0px;top:1016px;width:1560px;height:1px;background:#d4d4d4;"></div>
<div class="r" style="left:1564px;top:1016px;width:339px;height:1px;background:#a8a8a8;"></div>
<div class="r" style="left:1560px;top:1016px;width:4px;height:1px;background:#6a6a6a;"></div>
<div class="r" style="left:1px;top:1020px;width:428px;height:16px;background:transparent;border-top:1px solid #a0a0a0;border-left:1px solid #a0a0a0;border-bottom:1px solid #fff;border-right:1px solid #fff;"></div>
<div class="t" style="left:4.00px;top:1023.34px;font-size:12px;color:#000;transform:scaleX(0.9514);transform-origin:0 0;">Previewing : 363 frames (0 dropped) in 1:28:33, exposure 30,0s , last frame 32,5s</div>
<div class="r" style="left:431px;top:1020px;width:198px;height:16px;background:transparent;border-top:1px solid #a0a0a0;border-left:1px solid #a0a0a0;border-bottom:1px solid #fff;border-right:1px solid #fff;"></div>
<div class="t" style="left:435.00px;top:1023.34px;font-size:12px;color:#000;transform:scaleX(0.9677);transform-origin:0 0;">Memory: 2 of 50 frames in use.</div>
<div class="r" style="left:631px;top:1020px;width:198px;height:16px;background:transparent;border-top:1px solid #a0a0a0;border-left:1px solid #a0a0a0;border-bottom:1px solid #fff;border-right:1px solid #fff;"></div>
<div class="t" style="left:634.00px;top:1023.34px;font-size:12px;color:#000;transform:scaleX(0.9311);transform-origin:0 0;">4 Stacked, 0 Ignored, 120,00s</div>
<div class="t" style="left:1699.50px;top:1022.84px;font-size:12px;color:#000;transform:scaleX(0.9211);transform-origin:0 0;">Frame:</div>
<div class="r" style="left:1740px;top:1020px;width:100px;height:17px;background:#e6e6e6;box-shadow:inset 0 0 0 1px #bcbcbc;"></div>
<div class="r" style="left:1741px;top:1021px;width:45px;height:15px;background:#06b025;"></div>
<div class="t" style="left:1844.00px;top:1022.84px;font-size:12px;color:#000;transform:scaleX(0.9312);transform-origin:0 0;">00:15/00:15</div>
<div class="r" style="left:0px;top:1040px;width:1921px;height:40px;background:linear-gradient(90deg,#2d2824 0,#2a2622 700px,#1f1d1b 1000px,#141414 1300px,#1a1a1a 1921px);"></div>
<div class="r" style="left:539px;top:1040px;width:48px;height:40px;background:#48443f;"></div>
<div class="r" style="left:587px;top:1040px;width:49px;height:40px;background:#35312d;"></div>
<div class="r" style="left:151px;top:1078px;width:39px;height:2px;background:#a8a8a8;"></div>
<div class="r" style="left:347px;top:1078px;width:39px;height:2px;background:#a8a8a8;"></div>
<div class="r" style="left:445px;top:1078px;width:40px;height:2px;background:#a8a8a8;"></div>
<div class="r" style="left:494px;top:1078px;width:40px;height:2px;background:#a8a8a8;"></div>
<div class="r" style="left:539px;top:1078px;width:48px;height:2px;background:#a8a8a8;"></div>
<div class="r" style="left:588px;top:1078px;width:48px;height:2px;background:#a8a8a8;"></div>
<div class="r" style="left:641px;top:1078px;width:40px;height:2px;background:#a8a8a8;"></div>
<svg style="left:16px;top:1052px" width="17" height="16"><path d="M0 2.2L6.8 1.3V7.5H0zM7.8 1.1L17 0V7.5H7.8zM0 8.5H6.8V14.7L0 13.8zM7.8 8.5H17V16L7.8 14.9z" fill="#fff"/></svg>
<svg style="left:63px;top:1051px" width="18" height="18"><circle cx="9" cy="9" r="7" fill="none" stroke="#fff" stroke-width="1.6"/></svg>
<svg style="left:111px;top:1052px" width="18" height="16"><rect x="1" y="4" width="11" height="8" fill="none" stroke="#fff" stroke-width="1.4"/><path d="M1 1.5h11M1 14.5h11M15 1v3M15 6.5v3M15 12v3" stroke="#fff" stroke-width="1.4"/></svg>
<svg style="left:159px;top:1050px" width="23" height="20"><path d="M0.5 2h8l2 2h11.5v14H0.5z" fill="#f3cf6e"/><path d="M0.5 6h21.5v12H0.5z" fill="#fbe49a"/><path d="M6 11h10v8h-3v-4h-4v4h-3z" fill="#2d9fd8"/></svg>
<svg style="left:207px;top:1050px" width="26" height="20"><path d="M1 7L13 1 25 7V19H1z" fill="#fff"/><path d="M1 7L13 13 25 7" fill="none" stroke="#2a2622" stroke-width="1.2"/><path d="M14 12l10 7" stroke="#2a2622" stroke-width="1"/></svg>
<svg style="left:257px;top:1048px" width="24" height="24"><rect width="24" height="24" rx="2" fill="#0e8ee9"/><circle cx="12" cy="12" r="9.5" fill="#fff"/><path d="M5.5 12l4-3v2h5V9l4 3-4 3v-2h-5v2z" fill="#0e8ee9"/></svg>
<svg style="left:306px;top:1048px" width="24" height="24"><rect width="24" height="24" fill="#0a0a0a"/><path d="M9.5 4.5h5v5h5v5h-5v5h-5v-5h-5v-5h5z" fill="#fff"/></svg>
<svg style="left:355px;top:1048px" width="24" height="24"><circle cx="12" cy="12" r="11.5" fill="#db4437"/><path d="M12 12 L22 7 A11.5 11.5 0 0 1 12 23.5z" fill="#f4c20d"/><path d="M12 12 L12 23.5 A11.5 11.5 0 0 1 1.5 6.5z" fill="#0f9d58"/><circle cx="12" cy="12" r="5.3" fill="#fff"/><circle cx="12" cy="12" r="4.2" fill="#4285f4"/></svg>
<svg style="left:404px;top:1048px" width="24" height="24"><defs><radialGradient id="bs" cx="40%" cy="35%"><stop offset="0" stop-color="#bfe6ff"/><stop offset="1" stop-color="#1a6fc0"/></radialGradient></defs><circle cx="12" cy="12" r="11" fill="url(#bs)"/><path d="M6 5l5 15 3-14 2 13" fill="none" stroke="#fff" stroke-width="1.6"/></svg>
<svg style="left:453px;top:1048px" width="24" height="24"><defs><linearGradient id="bd" x1="0" y1="0" x2="0" y2="1"><stop offset="0" stop-color="#2020ff"/><stop offset="1" stop-color="#c8c8ff"/></linearGradient></defs><path d="M12 1L21 8V17L12 23L3 17V8z" fill="url(#bd)"/><path d="M12 12L21 8M12 12L3 8M12 12V23" stroke="#8080ff" stroke-width=".8"/></svg>
<svg style="left:501px;top:1049px" width="24" height="22"><path d="M3 3h5l4 6 4-6h5l-6.5 8.5L21 19h-5l-4-6-4 6H3l6.5-7.5z" fill="#050505" stroke="#1a1a1a"/><path d="M14 18h6" stroke="#7aa8ff" stroke-width="2"/></svg>
<svg style="left:550px;top:1048px" width="25" height="24"><defs><radialGradient id="jp" cx="45%" cy="40%"><stop offset="0" stop-color="#d0c8bc"/><stop offset="1" stop-color="#6e6458"/></radialGradient></defs><circle cx="13" cy="11" r="11" fill="url(#jp)"/><path d="M3 9h20M3 13h20" stroke="#b09a80" stroke-width="1.3"/><rect x="1" y="15" width="11" height="7" rx="1" transform="rotate(-15 6 18)" fill="#5aa89a" stroke="#c8c0a0"/></svg>
<svg style="left:600px;top:1048px" width="24" height="24"><rect x="0.5" y="0.5" width="23" height="23" fill="#0a2260" stroke="#8a8a30"/><path d="M11 4L5 19M11 4L14 17L19 11M5 19L19 11" stroke="#e0d840" stroke-width="1" fill="none"/><circle cx="11" cy="4" r="1.4" fill="#fff"/><circle cx="5" cy="19" r="1.4" fill="#fff"/><circle cx="19" cy="11" r="1.4" fill="#fff"/><circle cx="14" cy="17" r="1.4" fill="#fff"/></svg>
<svg style="left:649px;top:1049px" width="23" height="22"><rect x="0.5" y="0.5" width="22" height="21" fill="#061e26" stroke="#2fa3f7" stroke-width="1.5"/><text x="11.5" y="15.5" font-family="Liberation Sans" font-size="12" fill="#2fa3f7" text-anchor="middle">Ps</text></svg>
<div class="t" style="left:1871.00px;top:1044.84px;font-size:12px;color:#fff;transform:scaleX(0.8862);transform-origin:0 0;">00:03</div>
<div class="t" style="left:1856.00px;top:1062.84px;font-size:12px;color:#fff;transform:scaleX(0.9662);transform-origin:0 0;">24/03/2019</div>
<div class="r" style="left:1920px;top:1040px;width:1px;height:40px;background:#000;"></div>
</body></html>
